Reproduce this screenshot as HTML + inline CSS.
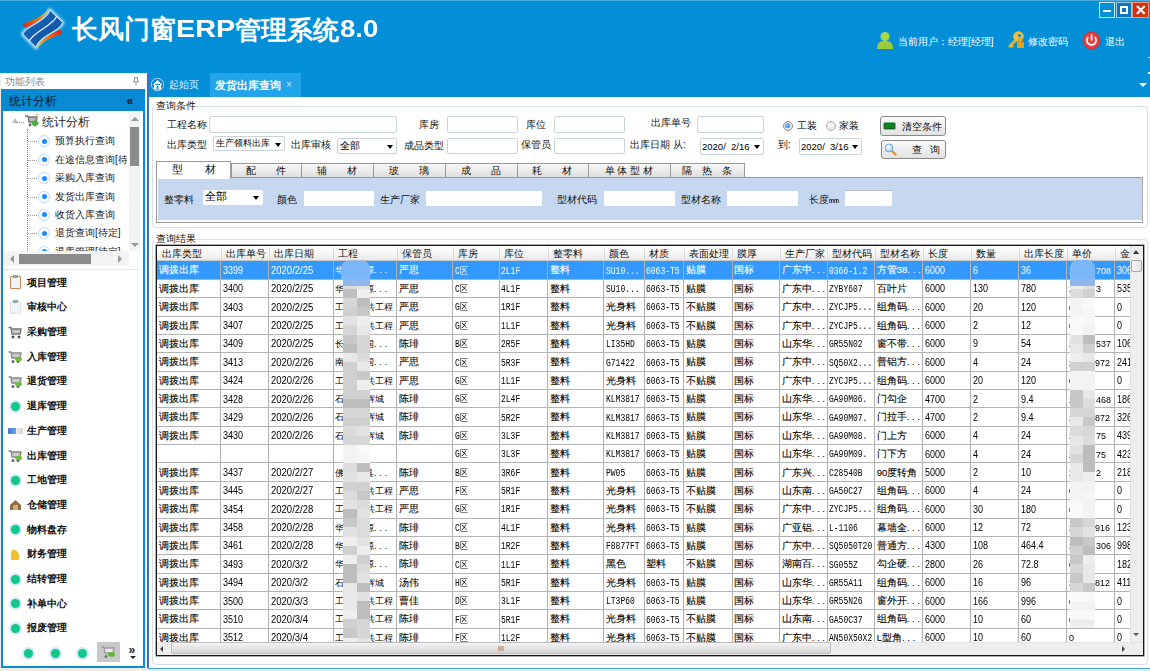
<!DOCTYPE html><html><head><meta charset="utf-8"><style>
*{box-sizing:border-box;margin:0;padding:0}
html,body{width:1150px;height:671px;overflow:hidden;background:#ececec;font-family:"Liberation Sans",sans-serif;color:#000}
.ab{position:absolute}
.t{position:absolute;white-space:nowrap;line-height:1}
.g{-webkit-text-stroke:0.1px currentColor}
.inp{position:absolute;background:#fff;border:1px solid #c9d3da;border-radius:2px}
.cmb{position:absolute;background:#fff;border:1px solid #c9d3da;border-radius:2px;font-size:10px;line-height:13px;padding-left:2px;white-space:nowrap;overflow:hidden}
.arr{position:absolute;width:0;height:0;border-left:3.5px solid transparent;border-right:3.5px solid transparent;border-top:4px solid #000}
.lbl{position:absolute;white-space:nowrap;font-size:10px;line-height:12px;color:#111}
</style></head><body>

<div class="ab" style="left:0;top:0;width:1150px;height:97px;background:#028fd8"></div>
<div class="ab" style="left:0;top:0;width:1150px;height:1px;background:#4fb0e6"></div>
<svg class="ab" style="left:18px;top:4px" width="50" height="50" viewBox="0 0 50 50">
<defs>
<linearGradient id="og" x1="0" y1="1" x2="1" y2="0"><stop offset="0" stop-color="#e01818"/><stop offset="0.55" stop-color="#f07810"/><stop offset="1" stop-color="#f0e040"/></linearGradient>
<linearGradient id="og2" x1="1" y1="0" x2="0" y2="1"><stop offset="0" stop-color="#e01818"/><stop offset="0.55" stop-color="#f07810"/><stop offset="1" stop-color="#f0e040"/></linearGradient>
<linearGradient id="bg" x1="0" y1="0" x2="1" y2="1"><stop offset="0" stop-color="#1a68bc"/><stop offset="1" stop-color="#0e50a0"/></linearGradient>
<filter id="gl" x="-30%" y="-30%" width="160%" height="160%"><feGaussianBlur stdDeviation="1.8"/></filter>
</defs>
<path d="M4.8 30.2 C8 22 28 18 32 6.3 L44.7 18.6 C41.5 27.5 21.5 31.5 17.9 43.2 Z" fill="none" stroke="#d8f0ff" stroke-width="3" filter="url(#gl)"/>
<path d="M4.8 20 C14 16 25 14 31 3.8 C29 12 20 18 7.5 24 Z" fill="url(#og)"/>
<path d="M44.7 29.5 C35.5 33.5 24.5 35.5 18.5 45.7 C20.5 37.5 29.5 31.5 42 25.5 Z" fill="url(#og2)"/>
<path d="M4.8 30.2 C8 22 28 18 32 6.3 L44.7 18.6 C41.5 27.5 21.5 31.5 17.9 43.2 Z" fill="url(#bg)" stroke="#e8f6ff" stroke-width="0.8"/>
<path d="M11.2 37.3 C14 28 35 22 38.7 12.3" stroke="#eef8ff" stroke-width="1.2" fill="none"/>
</svg>
<div class="t" style="left:72px;top:17px;font-size:25.5px;font-weight:bold;color:#fff">长风门窗</div>
<div class="t" style="left:176px;top:17px;font-size:24px;font-weight:bold;color:#fff;transform:scaleX(1.2);transform-origin:0 0">ERP</div>
<div class="t" style="left:235px;top:17px;font-size:26px;font-weight:bold;color:#fff">管理系统</div>
<div class="t" style="left:340px;top:17px;font-size:24px;font-weight:bold;color:#fff;transform:scaleX(1.15);transform-origin:0 0">8.0</div>
<div class="ab" style="left:1099px;top:2px;width:16px;height:16px;border:1px solid rgba(255,255,255,0.8);background:#028fd8"><div class="ab" style="left:3px;top:7px;width:8px;height:2px;background:#fff"></div></div>
<div class="ab" style="left:1116px;top:2px;width:16px;height:16px;border:1px solid rgba(255,255,255,0.6);background:#0a78c0"><div class="ab" style="left:3px;top:3px;width:8px;height:8px;border:2px solid #fff"></div></div>
<div class="ab" style="left:1132px;top:2px;width:17px;height:16px;border:1px solid rgba(255,220,200,0.6);background:#cc3510"><div class="t" style="left:2px;top:0px;font-size:14px;font-weight:bold;color:#fff">✕</div></div>
<svg class="ab" style="left:876px;top:31px" width="18" height="19" viewBox="0 0 18 19">
<circle cx="9" cy="5.5" r="4.6" fill="#a6d84a"/><path d="M1 18 C1 11 4 10 9 10 C14 10 17 11 17 18 Z" fill="#98cc3c"/></svg>
<div class="t" style="left:898px;top:36.5px;font-size:10px;color:#fff">当前用户：经理[经理]</div>
<svg class="ab" style="left:1006px;top:30px" width="20" height="20" viewBox="0 0 20 20">
<circle cx="12.5" cy="6.5" r="5.2" fill="#f2c040"/><circle cx="13.5" cy="5.5" r="1.6" fill="#028fd8"/>
<path d="M9 9 L2 16 L4 18 L5 17 L6 18 L8 16 L7 15 L11 11 Z" fill="#e8b030"/>
<rect x="11" y="12" width="7" height="6" rx="1" fill="#e0a020"/><path d="M12.5 12 V10.5 A2 2 0 0 1 16.5 10.5 V12" stroke="#c09030" stroke-width="1.2" fill="none"/></svg>
<div class="t" style="left:1028px;top:36.5px;font-size:10px;color:#fff">修改密码</div>
<svg class="ab" style="left:1082px;top:31px" width="19" height="19" viewBox="0 0 19 19">
<circle cx="9.5" cy="9.5" r="9" fill="#d83030"/><circle cx="9.5" cy="9.5" r="8" fill="#e04040"/>
<path d="M6.3 6 A4.6 4.6 0 1 0 12.7 6" stroke="#fff" stroke-width="1.7" fill="none"/><rect x="8.7" y="3.5" width="1.7" height="6" fill="#fff"/></svg>
<div class="t" style="left:1105px;top:36.5px;font-size:10px;color:#fff">退出</div>
<div class="ab" style="left:0;top:73px;width:148px;height:598px;background:#ececec"></div>
<div class="ab" style="left:145px;top:73px;width:2px;height:595px;background:#f3f5f7"></div>
<div class="ab" style="left:0;top:70px;width:8px;height:3px;background:#028fd8;border-bottom-left-radius:3px"></div>
<div class="ab" style="left:1px;top:73px;width:145px;height:16px;background:#fff"></div>
<div class="t" style="left:5px;top:76.5px;font-size:9.6px;color:#8a8a8a">功能列表</div>
<div class="t" style="left:134px;top:74px;font-size:10px;color:#999">ᅟ</div>
<svg class="ab" style="left:132px;top:77px" width="8" height="9" viewBox="0 0 8 9"><path d="M2 0.5 H6 M2.5 0.5 V5 M5.5 0.5 V5 M1 5 H7 M4 5 V8.5" stroke="#9a9a9a" stroke-width="1" fill="none"/></svg>
<div class="ab" style="left:1px;top:89px;width:144px;height:579px;border:2px solid #0a8ad3;border-top:none;background:#fff"></div>
<div class="ab" style="left:1px;top:89px;width:144px;height:22px;background:#0a8ad3"></div>
<div class="t" style="left:8.5px;top:96px;font-size:11.8px;color:#061626">统计分析</div>
<div class="t" style="left:126.5px;top:94.5px;font-size:12px;font-weight:bold;color:#061626">«</div>
<div class="ab" style="left:12px;top:118px;width:0;height:0;border-left:3px solid transparent;border-right:3px solid transparent;border-bottom:5px solid #bbb"></div>
<div class="ab" style="left:16px;top:122px;width:8px;border-top:1px dotted #999"></div>
<div class="ab" style="left:27px;top:129px;height:122px;border-left:1px dotted #888"></div>
<svg class="ab" style="left:24px;top:114px" width="15" height="14" viewBox="0 0 15 14"><path d="M1 2 H4 L5 8 H12 L13 3 H5" stroke="#777" stroke-width="1.4" fill="#bbb"/><circle cx="6" cy="11" r="1.4" fill="#666"/><circle cx="11" cy="11" r="1.4" fill="#666"/><ellipse cx="11" cy="9" rx="3.5" ry="2.5" fill="#4cb040"/><path d="M12 1 L14 0" stroke="#f08020"/></svg>
<div class="t" style="left:42px;top:116.8px;font-size:11.5px;color:#222">统计分析</div>
<div class="ab" style="left:28px;top:141.3px;width:9px;border-top:1px dotted #999"></div>
<div class="ab" style="left:38px;top:135.3px;width:12px;height:12px;border-radius:50%;background:#fff;border:1px solid #b8dcff"><div class="ab" style="left:2.5px;top:2.5px;width:5px;height:5px;border-radius:50%;background:#1a8cff"></div></div>
<div class="ab" style="left:55px;top:134.3px;width:72px;height:14px;overflow:hidden"><div class="t" style="left:0;top:2.2px;font-size:10.1px;color:#222">预算执行查询</div></div>
<div class="ab" style="left:28px;top:159.7px;width:9px;border-top:1px dotted #999"></div>
<div class="ab" style="left:38px;top:153.7px;width:12px;height:12px;border-radius:50%;background:#fff;border:1px solid #b8dcff"><div class="ab" style="left:2.5px;top:2.5px;width:5px;height:5px;border-radius:50%;background:#1a8cff"></div></div>
<div class="ab" style="left:55px;top:152.7px;width:72px;height:14px;overflow:hidden"><div class="t" style="left:0;top:2.2px;font-size:10.1px;color:#222">在途信息查询[待</div></div>
<div class="ab" style="left:28px;top:178.1px;width:9px;border-top:1px dotted #999"></div>
<div class="ab" style="left:38px;top:172.1px;width:12px;height:12px;border-radius:50%;background:#fff;border:1px solid #b8dcff"><div class="ab" style="left:2.5px;top:2.5px;width:5px;height:5px;border-radius:50%;background:#1a8cff"></div></div>
<div class="ab" style="left:55px;top:171.1px;width:72px;height:14px;overflow:hidden"><div class="t" style="left:0;top:2.2px;font-size:10.1px;color:#222">采购入库查询</div></div>
<div class="ab" style="left:28px;top:196.5px;width:9px;border-top:1px dotted #999"></div>
<div class="ab" style="left:38px;top:190.5px;width:12px;height:12px;border-radius:50%;background:#fff;border:1px solid #b8dcff"><div class="ab" style="left:2.5px;top:2.5px;width:5px;height:5px;border-radius:50%;background:#1a8cff"></div></div>
<div class="ab" style="left:55px;top:189.5px;width:72px;height:14px;overflow:hidden"><div class="t" style="left:0;top:2.2px;font-size:10.1px;color:#222">发货出库查询</div></div>
<div class="ab" style="left:28px;top:214.9px;width:9px;border-top:1px dotted #999"></div>
<div class="ab" style="left:38px;top:208.9px;width:12px;height:12px;border-radius:50%;background:#fff;border:1px solid #b8dcff"><div class="ab" style="left:2.5px;top:2.5px;width:5px;height:5px;border-radius:50%;background:#1a8cff"></div></div>
<div class="ab" style="left:55px;top:207.9px;width:72px;height:14px;overflow:hidden"><div class="t" style="left:0;top:2.2px;font-size:10.1px;color:#222">收货入库查询</div></div>
<div class="ab" style="left:28px;top:233.3px;width:9px;border-top:1px dotted #999"></div>
<div class="ab" style="left:38px;top:227.3px;width:12px;height:12px;border-radius:50%;background:#fff;border:1px solid #b8dcff"><div class="ab" style="left:2.5px;top:2.5px;width:5px;height:5px;border-radius:50%;background:#1a8cff"></div></div>
<div class="ab" style="left:55px;top:226.3px;width:72px;height:14px;overflow:hidden"><div class="t" style="left:0;top:2.2px;font-size:10.1px;color:#222">退货查询[待定]</div></div>
<div class="ab" style="left:28px;top:251.7px;width:9px;border-top:1px dotted #999"></div>
<div class="ab" style="left:38px;top:245.7px;width:12px;height:12px;border-radius:50%;background:#fff;border:1px solid #b8dcff"><div class="ab" style="left:2.5px;top:2.5px;width:5px;height:5px;border-radius:50%;background:#1a8cff"></div></div>
<div class="ab" style="left:55px;top:244.7px;width:72px;height:14px;overflow:hidden"><div class="t" style="left:0;top:2.2px;font-size:10.1px;color:#222">退库管理[待定]</div></div>
<div class="ab" style="left:3px;top:251px;width:139px;height:17px;background:#fff"></div>
<div class="ab" style="left:129px;top:111px;width:11px;height:140px;background:#f3f3f3"></div>
<div class="ab" style="left:131px;top:116.5px;width:0;height:0;border-left:4px solid transparent;border-right:4px solid transparent;border-bottom:4px solid #999"></div>
<div class="ab" style="left:130px;top:127px;width:9px;height:39px;background:#8c8c8c"></div>
<div class="ab" style="left:131px;top:243px;width:0;height:0;border-left:4px solid transparent;border-right:4px solid transparent;border-top:4px solid #999"></div>
<div class="ab" style="left:3px;top:251px;width:126px;height:15px;background:#f3f3f3"></div>
<div class="ab" style="left:10px;top:255px;width:0;height:0;border-top:4px solid transparent;border-bottom:4px solid transparent;border-right:4px solid #999"></div>
<div class="ab" style="left:19px;top:254px;width:72px;height:10px;background:#8c8c8c"></div>
<div class="ab" style="left:118px;top:255px;width:0;height:0;border-top:4px solid transparent;border-bottom:4px solid transparent;border-left:4px solid #999"></div>
<div class="ab" style="left:3px;top:269px;width:138px;height:1px;background:#e6e6e6"></div>
<div class="ab" style="left:10px;top:276.3px;width:11px;height:13px;border:1.5px solid #d08850;background:#eef4fb;border-radius:1px"><div class="ab" style="left:2px;top:-2px;width:5px;height:3px;background:#8aa"></div></div>
<div class="t" style="left:27px;top:277.6px;font-size:10px;font-weight:bold;color:#111">项目管理</div>
<div class="ab" style="left:10px;top:301.0px;width:11px;height:13px;border:1.5px solid #e8e0d0;background:#eef4fb;border-radius:1px"><div class="ab" style="left:2px;top:-2px;width:5px;height:3px;background:#8aa"></div></div>
<div class="t" style="left:27px;top:302.3px;font-size:10px;font-weight:bold;color:#111">审核中心</div>
<svg class="ab" style="left:8px;top:325.7px" width="15" height="13" viewBox="0 0 15 13"><path d="M0.5 1.5 H3 L4 8 H12 L13 3 H4" stroke="#777" stroke-width="1.4" fill="#c8c8c8"/><circle cx="5" cy="11" r="1.5" fill="#555"/><circle cx="11" cy="11" r="1.5" fill="#555"/></svg>
<div class="t" style="left:27px;top:327.0px;font-size:10px;font-weight:bold;color:#111">采购管理</div>
<svg class="ab" style="left:8px;top:349.9px" width="15" height="14" viewBox="0 0 15 14"><path d="M0.5 2 H3 L4 8 H12 L13 3 H4" stroke="#888" stroke-width="1.4" fill="#ccc"/><circle cx="5" cy="11.5" r="1.5" fill="#666"/><circle cx="10" cy="11.5" r="1.5" fill="#666"/><ellipse cx="10.5" cy="9" rx="3.5" ry="2.3" fill="#6cc040"/></svg>
<div class="t" style="left:27px;top:351.7px;font-size:10px;font-weight:bold;color:#111">入库管理</div>
<svg class="ab" style="left:8px;top:374.6px" width="15" height="14" viewBox="0 0 15 14"><path d="M0.5 2 H3 L4 8 H12 L13 3 H4" stroke="#888" stroke-width="1.4" fill="#ccc"/><circle cx="5" cy="11.5" r="1.5" fill="#666"/><circle cx="10" cy="11.5" r="1.5" fill="#666"/><ellipse cx="10.5" cy="9" rx="3.5" ry="2.3" fill="#6cc040"/></svg>
<div class="t" style="left:27px;top:376.4px;font-size:10px;font-weight:bold;color:#111">退货管理</div>
<div class="ab" style="left:9px;top:399.8px;width:13px;height:13px;border-radius:50%;background:#cfe9fb"><div class="ab" style="left:2px;top:2px;width:9px;height:9px;border-radius:50%;background:#10c888"></div></div>
<div class="t" style="left:27px;top:401.1px;font-size:10px;font-weight:bold;color:#111">退库管理</div>
<div class="ab" style="left:8px;top:428.0px;width:15px;height:6px;background:linear-gradient(90deg,#3a7ad0 0,#6aa8e8 55%,#e8e8e8 56%,#d8d8d8);border-radius:1px"></div>
<div class="t" style="left:27px;top:425.8px;font-size:10px;font-weight:bold;color:#111">生产管理</div>
<svg class="ab" style="left:8px;top:448.7px" width="15" height="14" viewBox="0 0 15 14"><path d="M0.5 2 H3 L4 8 H12 L13 3 H4" stroke="#888" stroke-width="1.4" fill="#ccc"/><circle cx="5" cy="11.5" r="1.5" fill="#666"/><circle cx="10" cy="11.5" r="1.5" fill="#666"/><ellipse cx="10.5" cy="9" rx="3.5" ry="2.3" fill="#6cc040"/></svg>
<div class="t" style="left:27px;top:450.5px;font-size:10px;font-weight:bold;color:#111">出库管理</div>
<div class="ab" style="left:9px;top:473.9px;width:13px;height:13px;border-radius:50%;background:#cfe9fb"><div class="ab" style="left:2px;top:2px;width:9px;height:9px;border-radius:50%;background:#10c888"></div></div>
<div class="t" style="left:27px;top:475.2px;font-size:10px;font-weight:bold;color:#111">工地管理</div>
<svg class="ab" style="left:9px;top:499.1px" width="13" height="12" viewBox="0 0 13 12"><path d="M1 6 L6.5 1 L12 6 V11 H1 Z" fill="#8a7040"/><rect x="4" y="6" width="5" height="5" fill="#d0b070"/></svg>
<div class="t" style="left:27px;top:499.9px;font-size:10px;font-weight:bold;color:#111">仓储管理</div>
<div class="ab" style="left:9px;top:523.3px;width:13px;height:13px;border-radius:50%;background:#cfe9fb"><div class="ab" style="left:2px;top:2px;width:9px;height:9px;border-radius:50%;background:#10c888"></div></div>
<div class="t" style="left:27px;top:524.6px;font-size:10px;font-weight:bold;color:#111">物料盘存</div>
<svg class="ab" style="left:10px;top:548.5px" width="10" height="12" viewBox="0 0 10 12"><path d="M2 1 H6 L9 5 V11 H1 V5 Z" fill="#f0c030"/></svg>
<div class="t" style="left:27px;top:549.3px;font-size:10px;font-weight:bold;color:#111">财务管理</div>
<div class="ab" style="left:9px;top:572.7px;width:13px;height:13px;border-radius:50%;background:#cfe9fb"><div class="ab" style="left:2px;top:2px;width:9px;height:9px;border-radius:50%;background:#10c888"></div></div>
<div class="t" style="left:27px;top:574.0px;font-size:10px;font-weight:bold;color:#111">结转管理</div>
<div class="ab" style="left:9px;top:597.4px;width:13px;height:13px;border-radius:50%;background:#cfe9fb"><div class="ab" style="left:2px;top:2px;width:9px;height:9px;border-radius:50%;background:#10c888"></div></div>
<div class="t" style="left:27px;top:598.7px;font-size:10px;font-weight:bold;color:#111">补单中心</div>
<div class="ab" style="left:9px;top:622.1px;width:13px;height:13px;border-radius:50%;background:#cfe9fb"><div class="ab" style="left:2px;top:2px;width:9px;height:9px;border-radius:50%;background:#10c888"></div></div>
<div class="t" style="left:27px;top:623.4px;font-size:10px;font-weight:bold;color:#111">报废管理</div>
<div class="ab" style="left:28px;top:646.5px;width:13px;height:13px;border-radius:50%;background:#cfe9fb;margin-left:-6.5px"><div class="ab" style="left:2px;top:2px;width:9px;height:9px;border-radius:50%;background:#10c888"></div></div>
<div class="ab" style="left:55px;top:646.5px;width:13px;height:13px;border-radius:50%;background:#cfe9fb;margin-left:-6.5px"><div class="ab" style="left:2px;top:2px;width:9px;height:9px;border-radius:50%;background:#10c888"></div></div>
<div class="ab" style="left:82px;top:646.5px;width:13px;height:13px;border-radius:50%;background:#cfe9fb;margin-left:-6.5px"><div class="ab" style="left:2px;top:2px;width:9px;height:9px;border-radius:50%;background:#10c888"></div></div>
<div class="ab" style="left:97px;top:642px;width:23px;height:20px;background:#c8c8c8"></div>
<svg class="ab" style="left:101px;top:645px" width="15" height="14" viewBox="0 0 15 14"><path d="M0.5 2 H3 L4 8 H12 L13 3 H4" stroke="#999" stroke-width="1.3" fill="#e8e8e8"/><circle cx="5" cy="11.5" r="1.5" fill="#777"/><ellipse cx="10.5" cy="9.5" rx="3.5" ry="2.3" fill="#60b830"/></svg>
<div class="t" style="left:128.5px;top:644px;font-size:12px;font-weight:bold;color:#223">»</div>
<div class="ab" style="left:130px;top:656px;width:0;height:0;border-left:3px solid transparent;border-right:3px solid transparent;border-top:3px solid #223"></div>
<div class="ab" style="left:148px;top:73px;width:1002px;height:24px;background:#028fd8"></div>
<svg class="ab" style="left:150px;top:77px" width="15" height="15" viewBox="0 0 15 15"><circle cx="7.5" cy="7.5" r="6.2" fill="#1a80c8" stroke="#b8dcf4" stroke-width="0.9"/><path d="M3 8 L7.5 3.5 L12 8 M4.5 7 V12 H10.5 V7" fill="#fff" stroke="#fff" stroke-width="1"/><rect x="6.5" y="9" width="2" height="3" fill="#1a8ad0"/></svg>
<div class="t" style="left:169px;top:80px;font-size:10px;color:#e6f3fb">起始页</div>
<div class="ab" style="left:210px;top:73px;width:91px;height:24px;background:#21a4ea"></div>
<div class="t" style="left:215px;top:80px;font-size:10.5px;font-weight:bold;color:#fff">发货出库查询</div>
<div class="t" style="left:286px;top:80px;font-size:10px;color:#cfeafa">×</div>
<div class="ab" style="left:1138.5px;top:82.5px;width:0;height:0;border-left:4px solid transparent;border-right:4px solid transparent;border-top:4.5px solid #fff"></div>
<div class="ab" style="left:1148px;top:56.5px;width:2px;height:1.5px;background:#fff"></div>
<div class="ab" style="left:1148px;top:72px;width:2px;height:1.5px;background:#fff"></div>
<div class="ab" style="left:148.5px;top:97px;width:1001.5px;height:571px;background:#fff"></div>
<div class="ab" style="left:148px;top:667.5px;width:1002px;height:1.5px;background:#40a8e0"></div>
<div class="ab" style="left:147px;top:73px;width:1.5px;height:595px;background:#3a6ec8"></div>
<div class="ab" style="left:151.5px;top:106px;width:996px;height:121.5px;border:1px solid #d6e0e6;border-radius:4px"></div>
<div class="ab" style="left:155px;top:100px;width:42px;height:12px;background:#fff"></div>
<div class="lbl" style="left:156px;top:100px;font-size:9.8px">查询条件</div>
<div class="lbl" style="left:167px;top:119px;font-size:10px">工程名称</div>
<div class="inp" style="left:209px;top:116px;width:188px;height:17px"></div>
<div class="lbl" style="left:419px;top:119px;font-size:10px">库房</div>
<div class="inp" style="left:447px;top:116px;width:71px;height:17px"></div>
<div class="lbl" style="left:526px;top:119px;font-size:10px">库位</div>
<div class="inp" style="left:554px;top:116px;width:71px;height:17px"></div>
<div class="lbl" style="left:651px;top:117px;font-size:10px">出库单号</div>
<div class="inp" style="left:697px;top:116px;width:67px;height:17px"></div>
<div class="lbl" style="left:167px;top:139px;font-size:10px">出库类型</div>
<div class="cmb" style="left:213px;top:136px;width:72px;height:15px;font-size:9.3px">生产领料出库<div class="arr" style="right:3px;top:6px"></div></div>
<div class="lbl" style="left:291px;top:139px;font-size:10px">出库审核</div>
<div class="cmb" style="left:337px;top:138px;width:60px;height:16px;font-size:10px">全部<div class="arr" style="right:3px;top:6px"></div></div>
<div class="lbl" style="left:404px;top:140px;font-size:10px">成品类型</div>
<div class="inp" style="left:447px;top:138px;width:71px;height:16px"></div>
<div class="lbl" style="left:521px;top:139px;font-size:10px">保管员</div>
<div class="inp" style="left:554px;top:138px;width:71px;height:16px"></div>
<div class="lbl" style="left:630px;top:139px;font-size:10px">出库日期</div>
<div class="lbl" style="left:673px;top:139px;font-size:10px">从:</div>
<div class="cmb" style="left:700px;top:138px;width:64px;height:17px;padding-left:1px"><div class="t" style="left:1px;top:3px;font-size:9.5px">2020/&nbsp;&nbsp;2/16</div><div class="arr" style="right:3px;top:6px"></div></div>
<div class="lbl" style="left:778px;top:139px;font-size:10px">到:</div>
<div class="cmb" style="left:799px;top:138px;width:63px;height:17px;padding-left:1px"><div class="t" style="left:1px;top:3px;font-size:9.5px">2020/&nbsp;&nbsp;3/16</div><div class="arr" style="right:3px;top:6px"></div></div>
<div class="ab" style="left:782.5px;top:120.5px;width:10px;height:10px;border-radius:50%;border:1px solid #8a8a8a;background:#e4e8ec"><div class="ab" style="left:1.5px;top:1.5px;width:5px;height:5px;border-radius:50%;background:radial-gradient(circle at 40% 35%,#8fd0ff,#0a6ac0)"></div></div>
<div class="lbl" style="left:797px;top:120px;font-size:10px">工装</div>
<div class="ab" style="left:825.5px;top:120.5px;width:10px;height:10px;border-radius:50%;border:1px solid #a8a8a8;background:radial-gradient(circle at 40% 35%,#fff,#ddd)"></div>
<div class="lbl" style="left:839px;top:120px;font-size:10px">家装</div>
<div class="ab" style="left:880px;top:116px;width:66px;height:20px;border:1px solid #8a8a8a;border-radius:3px;background:linear-gradient(#fafafa,#e2e2e2)"></div>
<div class="ab" style="left:883px;top:122px;width:12.5px;height:8px;border:1.5px solid #78c088;border-radius:2px;background:#0a8a1a;box-shadow:inset 0 0 0 0.8px #1a5a22"></div>
<div class="lbl" style="left:902px;top:121px;font-size:9.6px">清空条件</div>
<div class="ab" style="left:881px;top:140px;width:65px;height:19px;border:1px solid #8a8a8a;border-radius:3px;background:linear-gradient(#fafafa,#e2e2e2)"></div>
<svg class="ab" style="left:884px;top:143px" width="13" height="13" viewBox="0 0 13 13"><defs><radialGradient id="lens" cx="0.4" cy="0.35" r="0.7"><stop offset="0" stop-color="#ffffff"/><stop offset="1" stop-color="#8cc8f0"/></radialGradient></defs><path d="M7.5 7.5 L11.5 11.5" stroke="#e09030" stroke-width="2.4" stroke-linecap="round"/><circle cx="5" cy="5" r="4" fill="url(#lens)" stroke="#7aaed8" stroke-width="1"/></svg>
<div class="lbl" style="left:912px;top:144px;font-size:10px;letter-spacing:8px">查询</div>
<div class="ab" style="left:230.6px;top:163px;width:71.20000000000002px;height:14.5px;border:1px solid #9a9a9a;border-bottom:none;background:linear-gradient(#f8f8f8,#dcdcdc)"></div>
<div class="lbl" style="left:230.6px;top:164.5px;width:70.20000000000002px;text-align:center;font-size:10px">配　　件</div>
<div class="ab" style="left:300.8px;top:163px;width:72.80000000000001px;height:14.5px;border:1px solid #9a9a9a;border-bottom:none;background:linear-gradient(#f8f8f8,#dcdcdc)"></div>
<div class="lbl" style="left:300.8px;top:164.5px;width:71.80000000000001px;text-align:center;font-size:10px">辅　　材</div>
<div class="ab" style="left:372.6px;top:163px;width:73.0px;height:14.5px;border:1px solid #9a9a9a;border-bottom:none;background:linear-gradient(#f8f8f8,#dcdcdc)"></div>
<div class="lbl" style="left:372.6px;top:164.5px;width:72.0px;text-align:center;font-size:10px">玻　　璃</div>
<div class="ab" style="left:444.6px;top:163px;width:73.10000000000002px;height:14.5px;border:1px solid #9a9a9a;border-bottom:none;background:linear-gradient(#f8f8f8,#dcdcdc)"></div>
<div class="lbl" style="left:444.6px;top:164.5px;width:72.10000000000002px;text-align:center;font-size:10px">成　　品</div>
<div class="ab" style="left:516.7px;top:163px;width:72.29999999999995px;height:14.5px;border:1px solid #9a9a9a;border-bottom:none;background:linear-gradient(#f8f8f8,#dcdcdc)"></div>
<div class="lbl" style="left:516.7px;top:164.5px;width:71.29999999999995px;text-align:center;font-size:10px">耗　　材</div>
<div class="ab" style="left:588px;top:163px;width:82.70000000000005px;height:14.5px;border:1px solid #9a9a9a;border-bottom:none;background:linear-gradient(#f8f8f8,#dcdcdc)"></div>
<div class="lbl" style="left:588px;top:164.5px;width:81.70000000000005px;text-align:center;font-size:10px">单 体 型 材</div>
<div class="ab" style="left:669.7px;top:163px;width:75.59999999999991px;height:14.5px;border:1px solid #9a9a9a;border-bottom:none;background:linear-gradient(#f8f8f8,#dcdcdc)"></div>
<div class="lbl" style="left:669.7px;top:164.5px;width:74.59999999999991px;text-align:center;font-size:10px">隔　热　条</div>
<div class="ab" style="left:156px;top:177px;width:987px;height:45.5px;border:1px solid #9a9a9a;border-right-color:#aaa;background:#fff"></div>
<div class="ab" style="left:158px;top:178px;width:983.5px;height:41.5px;background:#c5d8f0"></div>
<div class="ab" style="left:156px;top:161px;width:75px;height:18px;border:1px solid #9a9a9a;border-bottom:none;background:#fff"></div>
<div class="lbl" style="left:156px;top:163px;width:75px;text-align:center;font-size:10.5px">型　　材</div>
<div class="lbl" style="left:164px;top:194px;font-size:10px">整零料</div>
<div class="cmb" style="left:203px;top:190px;width:60px;height:15px;border:none;font-size:10.5px;line-height:13px">全部<div class="arr" style="right:4px;top:6px"></div></div>
<div class="lbl" style="left:277px;top:194px;font-size:10px">颜色</div>
<div class="inp" style="left:304px;top:191px;width:70px;height:15px;border:none;border-radius:0"></div>
<div class="lbl" style="left:380px;top:194px;font-size:10px">生产厂家</div>
<div class="inp" style="left:426px;top:191px;width:116px;height:15px;border:none;border-radius:0"></div>
<div class="lbl" style="left:557px;top:194px;font-size:10px">型材代码</div>
<div class="inp" style="left:604px;top:191px;width:71px;height:15px;border:none;border-radius:0"></div>
<div class="lbl" style="left:681px;top:194px;font-size:10px">型材名称</div>
<div class="inp" style="left:727px;top:191px;width:71px;height:15px;border:none;border-radius:0"></div>
<div class="lbl" style="left:809px;top:194px;font-size:10px">长度<span style="font-size:7px;font-weight:bold;display:inline-block;transform:scaleX(0.8);transform-origin:0 0">mm</span></div>
<div class="inp" style="left:845px;top:189.5px;width:47px;height:16.5px;border:none;border-top:1px solid #b8b8c0;border-radius:0"></div>
<div class="ab" style="left:151.5px;top:238.5px;width:996px;height:426.5px;border:1px solid #d6e0e6;border-radius:4px"></div>
<div class="ab" style="left:155px;top:233px;width:42px;height:10px;background:#fff"></div>
<div class="lbl" style="left:156px;top:232.5px;font-size:9.8px">查询结果</div>
<div class="ab" style="left:156px;top:245px;width:988px;height:411px;border:1px solid #151515;box-shadow:0 0 0 0.6px #777;background:#fff;overflow:hidden">
<div class="ab" style="left:0;top:0;width:1000px;height:14.949999999999989px;background:linear-gradient(#ffffff,#f4f4f4 60%,#e8e8e8);border-bottom:1px solid #c8c8c8"></div>
<div class="t" style="left:4.5px;top:2.5px;font-size:10px;color:#111">出库类型</div>
<div class="ab" style="left:63.5px;top:1px;width:1px;height:12.9px;background:#dcdcdc"></div>
<div class="t" style="left:68.5px;top:2.5px;font-size:10px;color:#111">出库单号</div>
<div class="ab" style="left:111.5px;top:1px;width:1px;height:12.9px;background:#dcdcdc"></div>
<div class="t" style="left:116.5px;top:2.5px;font-size:10px;color:#111">出库日期</div>
<div class="ab" style="left:176.0px;top:1px;width:1px;height:12.9px;background:#dcdcdc"></div>
<div class="t" style="left:181.0px;top:2.5px;font-size:10px;color:#111">工程</div>
<div class="ab" style="left:239.5px;top:1px;width:1px;height:12.9px;background:#dcdcdc"></div>
<div class="t" style="left:244.5px;top:2.5px;font-size:10px;color:#111">保管员</div>
<div class="ab" style="left:295.6px;top:1px;width:1px;height:12.9px;background:#dcdcdc"></div>
<div class="t" style="left:300.6px;top:2.5px;font-size:10px;color:#111">库房</div>
<div class="ab" style="left:342.0px;top:1px;width:1px;height:12.9px;background:#dcdcdc"></div>
<div class="t" style="left:347.0px;top:2.5px;font-size:10px;color:#111">库位</div>
<div class="ab" style="left:390.5px;top:1px;width:1px;height:12.9px;background:#dcdcdc"></div>
<div class="t" style="left:395.5px;top:2.5px;font-size:10px;color:#111">整零料</div>
<div class="ab" style="left:446.5px;top:1px;width:1px;height:12.9px;background:#dcdcdc"></div>
<div class="t" style="left:451.5px;top:2.5px;font-size:10px;color:#111">颜色</div>
<div class="ab" style="left:487.0px;top:1px;width:1px;height:12.9px;background:#dcdcdc"></div>
<div class="t" style="left:492.0px;top:2.5px;font-size:10px;color:#111">材质</div>
<div class="ab" style="left:526.5px;top:1px;width:1px;height:12.9px;background:#dcdcdc"></div>
<div class="t" style="left:531.5px;top:2.5px;font-size:10px;color:#111">表面处理</div>
<div class="ab" style="left:575.0px;top:1px;width:1px;height:12.9px;background:#dcdcdc"></div>
<div class="t" style="left:580.0px;top:2.5px;font-size:10px;color:#111">膜厚</div>
<div class="ab" style="left:622.7px;top:1px;width:1px;height:12.9px;background:#dcdcdc"></div>
<div class="t" style="left:627.7px;top:2.5px;font-size:10px;color:#111">生产厂家</div>
<div class="ab" style="left:670.3px;top:1px;width:1px;height:12.9px;background:#dcdcdc"></div>
<div class="t" style="left:675.3px;top:2.5px;font-size:10px;color:#111">型材代码</div>
<div class="ab" style="left:717.8px;top:1px;width:1px;height:12.9px;background:#dcdcdc"></div>
<div class="t" style="left:722.8px;top:2.5px;font-size:10px;color:#111">型材名称</div>
<div class="ab" style="left:765.7px;top:1px;width:1px;height:12.9px;background:#dcdcdc"></div>
<div class="t" style="left:770.7px;top:2.5px;font-size:10px;color:#111">长度</div>
<div class="ab" style="left:813.7px;top:1px;width:1px;height:12.9px;background:#dcdcdc"></div>
<div class="t" style="left:818.7px;top:2.5px;font-size:10px;color:#111">数量</div>
<div class="ab" style="left:861.5px;top:1px;width:1px;height:12.9px;background:#dcdcdc"></div>
<div class="t" style="left:866.5px;top:2.5px;font-size:10px;color:#111">出库长度</div>
<div class="ab" style="left:909.7px;top:1px;width:1px;height:12.9px;background:#dcdcdc"></div>
<div class="t" style="left:914.7px;top:2.5px;font-size:10px;color:#111">单价</div>
<div class="ab" style="left:957.8px;top:1px;width:1px;height:12.9px;background:#dcdcdc"></div>
<div class="t" style="left:962.8px;top:2.5px;font-size:10px;color:#111">金额</div>
<div class="ab" style="left:0;top:14.95px;width:1000px;height:18.37px;background:#3399ff"></div>
<div class="t g" style="left:1.5px;top:19.4px;font-size:9.5px;color:#fff">调拨出库</div>
<div class="t" style="left:65.5px;top:19.9px;font-size:10px;transform:scaleX(0.9);transform-origin:0 0;color:#fff">3399</div>
<div class="t" style="left:113.5px;top:19.9px;font-size:10px;transform:scaleX(0.95);transform-origin:0 0;color:#fff">2020/2/25</div>
<div class="t" style="left:178.0px;top:19.4px;font-size:9.4px;color:#fff">华</div>
<div class="ab" style="left:208.0px;top:19.4px;width:30.0px;height:14px;overflow:hidden"><div class="t" style="left:0;top:0;font-size:9.4px;color:#fff">源. . .</div></div>
<div class="t g" style="left:241.5px;top:19.4px;font-size:9.5px;color:#fff">严思</div>
<div class="t" style="left:297.6px;top:20.6px;font-family:'Liberation Mono',monospace;font-size:10px;transform:scaleX(0.8);transform-origin:0 0;color:#fff">C区</div>
<div class="t" style="left:344.0px;top:20.6px;font-family:'Liberation Mono',monospace;font-size:10px;transform:scaleX(0.8);transform-origin:0 0;color:#fff">2L1F</div>
<div class="t g" style="left:392.5px;top:19.4px;font-size:9.5px;color:#fff">整料</div>
<div class="t" style="left:448.5px;top:20.6px;font-family:'Liberation Mono',monospace;font-size:10px;transform:scaleX(0.8);transform-origin:0 0;color:#fff">SU10...</div>
<div class="t" style="left:489.0px;top:20.6px;font-family:'Liberation Mono',monospace;font-size:10px;transform:scaleX(0.8);transform-origin:0 0;color:#fff">6063-T5</div>
<div class="t g" style="left:528.5px;top:19.4px;font-size:9.5px;color:#fff">贴膜</div>
<div class="t g" style="left:577.0px;top:19.4px;font-size:9.5px;color:#fff">国标</div>
<div class="t g" style="left:624.7px;top:19.4px;font-size:9.5px;color:#fff">广东中. . .</div>
<div class="t" style="left:672.3px;top:20.6px;font-family:'Liberation Mono',monospace;font-size:10px;transform:scaleX(0.8);transform-origin:0 0;color:#fff">0366-1.2</div>
<div class="t g" style="left:719.8px;top:19.4px;font-size:9.5px;color:#fff">方管38. . .</div>
<div class="t" style="left:767.7px;top:19.9px;font-size:10px;transform:scaleX(0.9);transform-origin:0 0;color:#fff">6000</div>
<div class="t" style="left:815.7px;top:19.9px;font-size:10px;transform:scaleX(0.9);transform-origin:0 0;color:#fff">6</div>
<div class="t" style="left:863.5px;top:19.9px;font-size:10px;transform:scaleX(0.9);transform-origin:0 0;color:#fff">36</div>
<div class="t" style="left:911.7px;top:19.9px;font-size:9.5px;transform:scaleX(0.94);transform-origin:0 0;color:#fff">2</div>
<div class="t" style="left:938.5px;top:19.9px;font-size:9.5px;transform:scaleX(0.94);transform-origin:0 0;color:#fff">708</div>
<div class="t" style="left:959.8px;top:19.9px;font-size:10px;transform:scaleX(0.9);transform-origin:0 0;color:#fff">306</div>
<div class="ab" style="left:0;top:33.32px;width:1000px;height:18.37px;background:#fff"></div>
<div class="t g" style="left:1.5px;top:37.8px;font-size:9.5px;color:#000">调拨出库</div>
<div class="t" style="left:65.5px;top:38.3px;font-size:10px;transform:scaleX(0.9);transform-origin:0 0;color:#000">3400</div>
<div class="t" style="left:113.5px;top:38.3px;font-size:10px;transform:scaleX(0.95);transform-origin:0 0;color:#000">2020/2/25</div>
<div class="t" style="left:178.0px;top:37.8px;font-size:9.4px;color:#000">华</div>
<div class="ab" style="left:208.0px;top:37.8px;width:30.0px;height:14px;overflow:hidden"><div class="t" style="left:0;top:0;font-size:9.4px;color:#000">源. . .</div></div>
<div class="t g" style="left:241.5px;top:37.8px;font-size:9.5px;color:#000">严思</div>
<div class="t" style="left:297.6px;top:39.0px;font-family:'Liberation Mono',monospace;font-size:10px;transform:scaleX(0.8);transform-origin:0 0;color:#000">C区</div>
<div class="t" style="left:344.0px;top:39.0px;font-family:'Liberation Mono',monospace;font-size:10px;transform:scaleX(0.8);transform-origin:0 0;color:#000">4L1F</div>
<div class="t g" style="left:392.5px;top:37.8px;font-size:9.5px;color:#000">整料</div>
<div class="t" style="left:448.5px;top:39.0px;font-family:'Liberation Mono',monospace;font-size:10px;transform:scaleX(0.8);transform-origin:0 0;color:#000">SU10...</div>
<div class="t" style="left:489.0px;top:39.0px;font-family:'Liberation Mono',monospace;font-size:10px;transform:scaleX(0.8);transform-origin:0 0;color:#000">6063-T5</div>
<div class="t g" style="left:528.5px;top:37.8px;font-size:9.5px;color:#000">贴膜</div>
<div class="t g" style="left:577.0px;top:37.8px;font-size:9.5px;color:#000">国标</div>
<div class="t g" style="left:624.7px;top:37.8px;font-size:9.5px;color:#000">广东中. . .</div>
<div class="t" style="left:672.3px;top:39.0px;font-family:'Liberation Mono',monospace;font-size:10px;transform:scaleX(0.8);transform-origin:0 0;color:#000">ZYBY607</div>
<div class="t g" style="left:719.8px;top:37.8px;font-size:9.5px;color:#000">百叶片</div>
<div class="t" style="left:767.7px;top:38.3px;font-size:10px;transform:scaleX(0.9);transform-origin:0 0;color:#000">6000</div>
<div class="t" style="left:815.7px;top:38.3px;font-size:10px;transform:scaleX(0.9);transform-origin:0 0;color:#000">130</div>
<div class="t" style="left:863.5px;top:38.3px;font-size:10px;transform:scaleX(0.9);transform-origin:0 0;color:#000">780</div>
<div class="t" style="left:911.7px;top:38.3px;font-size:9.5px;transform:scaleX(0.94);transform-origin:0 0;color:#000">2</div>
<div class="t" style="left:938.5px;top:38.3px;font-size:9.5px;transform:scaleX(0.94);transform-origin:0 0;color:#000">3</div>
<div class="t" style="left:959.8px;top:38.3px;font-size:10px;transform:scaleX(0.9);transform-origin:0 0;color:#000">535</div>
<div class="ab" style="left:0;top:51.68px;width:1000px;height:18.37px;background:#fff"></div>
<div class="t g" style="left:1.5px;top:56.2px;font-size:9.5px;color:#000">调拨出库</div>
<div class="t" style="left:65.5px;top:56.7px;font-size:10px;transform:scaleX(0.9);transform-origin:0 0;color:#000">3403</div>
<div class="t" style="left:113.5px;top:56.7px;font-size:10px;transform:scaleX(0.95);transform-origin:0 0;color:#000">2020/2/25</div>
<div class="t" style="left:178.0px;top:56.2px;font-size:9.4px;color:#000">工</div>
<div class="ab" style="left:209.0px;top:56.2px;width:30.0px;height:14px;overflow:hidden"><div class="t" style="left:0;top:0;font-size:9.4px;color:#000">共工程</div></div>
<div class="t g" style="left:241.5px;top:56.2px;font-size:9.5px;color:#000">严思</div>
<div class="t" style="left:297.6px;top:57.4px;font-family:'Liberation Mono',monospace;font-size:10px;transform:scaleX(0.8);transform-origin:0 0;color:#000">G区</div>
<div class="t" style="left:344.0px;top:57.4px;font-family:'Liberation Mono',monospace;font-size:10px;transform:scaleX(0.8);transform-origin:0 0;color:#000">1R1F</div>
<div class="t g" style="left:392.5px;top:56.2px;font-size:9.5px;color:#000">整料</div>
<div class="t g" style="left:448.5px;top:56.2px;font-size:9.5px;color:#000">光身料</div>
<div class="t" style="left:489.0px;top:57.4px;font-family:'Liberation Mono',monospace;font-size:10px;transform:scaleX(0.8);transform-origin:0 0;color:#000">6063-T5</div>
<div class="t g" style="left:528.5px;top:56.2px;font-size:9.5px;color:#000">不贴膜</div>
<div class="t g" style="left:577.0px;top:56.2px;font-size:9.5px;color:#000">国标</div>
<div class="t g" style="left:624.7px;top:56.2px;font-size:9.5px;color:#000">广东中. . .</div>
<div class="t" style="left:672.3px;top:57.4px;font-family:'Liberation Mono',monospace;font-size:10px;transform:scaleX(0.8);transform-origin:0 0;color:#000">ZYCJP5...</div>
<div class="t g" style="left:719.8px;top:56.2px;font-size:9.5px;color:#000">组角码. . .</div>
<div class="t" style="left:767.7px;top:56.7px;font-size:10px;transform:scaleX(0.9);transform-origin:0 0;color:#000">6000</div>
<div class="t" style="left:815.7px;top:56.7px;font-size:10px;transform:scaleX(0.9);transform-origin:0 0;color:#000">20</div>
<div class="t" style="left:863.5px;top:56.7px;font-size:10px;transform:scaleX(0.9);transform-origin:0 0;color:#000">120</div>
<div class="t" style="left:911.7px;top:56.7px;font-size:9.5px;transform:scaleX(0.94);transform-origin:0 0;color:#000">0</div>
<div class="t" style="left:959.8px;top:56.7px;font-size:10px;transform:scaleX(0.9);transform-origin:0 0;color:#000">0</div>
<div class="ab" style="left:0;top:70.05px;width:1000px;height:18.37px;background:#fff"></div>
<div class="t g" style="left:1.5px;top:74.5px;font-size:9.5px;color:#000">调拨出库</div>
<div class="t" style="left:65.5px;top:75.0px;font-size:10px;transform:scaleX(0.9);transform-origin:0 0;color:#000">3407</div>
<div class="t" style="left:113.5px;top:75.0px;font-size:10px;transform:scaleX(0.95);transform-origin:0 0;color:#000">2020/2/25</div>
<div class="t" style="left:178.0px;top:74.5px;font-size:9.4px;color:#000">工</div>
<div class="ab" style="left:209.0px;top:74.5px;width:30.0px;height:14px;overflow:hidden"><div class="t" style="left:0;top:0;font-size:9.4px;color:#000">共工程</div></div>
<div class="t g" style="left:241.5px;top:74.5px;font-size:9.5px;color:#000">严思</div>
<div class="t" style="left:297.6px;top:75.7px;font-family:'Liberation Mono',monospace;font-size:10px;transform:scaleX(0.8);transform-origin:0 0;color:#000">G区</div>
<div class="t" style="left:344.0px;top:75.7px;font-family:'Liberation Mono',monospace;font-size:10px;transform:scaleX(0.8);transform-origin:0 0;color:#000">1L1F</div>
<div class="t g" style="left:392.5px;top:74.5px;font-size:9.5px;color:#000">整料</div>
<div class="t g" style="left:448.5px;top:74.5px;font-size:9.5px;color:#000">光身料</div>
<div class="t" style="left:489.0px;top:75.7px;font-family:'Liberation Mono',monospace;font-size:10px;transform:scaleX(0.8);transform-origin:0 0;color:#000">6063-T5</div>
<div class="t g" style="left:528.5px;top:74.5px;font-size:9.5px;color:#000">不贴膜</div>
<div class="t g" style="left:577.0px;top:74.5px;font-size:9.5px;color:#000">国标</div>
<div class="t g" style="left:624.7px;top:74.5px;font-size:9.5px;color:#000">广东中. . .</div>
<div class="t" style="left:672.3px;top:75.7px;font-family:'Liberation Mono',monospace;font-size:10px;transform:scaleX(0.8);transform-origin:0 0;color:#000">ZYCJP5...</div>
<div class="t g" style="left:719.8px;top:74.5px;font-size:9.5px;color:#000">组角码. . .</div>
<div class="t" style="left:767.7px;top:75.0px;font-size:10px;transform:scaleX(0.9);transform-origin:0 0;color:#000">6000</div>
<div class="t" style="left:815.7px;top:75.0px;font-size:10px;transform:scaleX(0.9);transform-origin:0 0;color:#000">2</div>
<div class="t" style="left:863.5px;top:75.0px;font-size:10px;transform:scaleX(0.9);transform-origin:0 0;color:#000">12</div>
<div class="t" style="left:911.7px;top:75.0px;font-size:9.5px;transform:scaleX(0.94);transform-origin:0 0;color:#000">0</div>
<div class="t" style="left:959.8px;top:75.0px;font-size:10px;transform:scaleX(0.9);transform-origin:0 0;color:#000">0</div>
<div class="ab" style="left:0;top:88.41px;width:1000px;height:18.37px;background:#fff"></div>
<div class="t g" style="left:1.5px;top:92.9px;font-size:9.5px;color:#000">调拨出库</div>
<div class="t" style="left:65.5px;top:93.4px;font-size:10px;transform:scaleX(0.9);transform-origin:0 0;color:#000">3409</div>
<div class="t" style="left:113.5px;top:93.4px;font-size:10px;transform:scaleX(0.95);transform-origin:0 0;color:#000">2020/2/25</div>
<div class="t" style="left:178.0px;top:92.9px;font-size:9.4px;color:#000">长</div>
<div class="ab" style="left:208.0px;top:92.9px;width:30.0px;height:14px;overflow:hidden"><div class="t" style="left:0;top:0;font-size:9.4px;color:#000">国. . .</div></div>
<div class="t g" style="left:241.5px;top:92.9px;font-size:9.5px;color:#000">陈琲</div>
<div class="t" style="left:297.6px;top:94.1px;font-family:'Liberation Mono',monospace;font-size:10px;transform:scaleX(0.8);transform-origin:0 0;color:#000">B区</div>
<div class="t" style="left:344.0px;top:94.1px;font-family:'Liberation Mono',monospace;font-size:10px;transform:scaleX(0.8);transform-origin:0 0;color:#000">2R5F</div>
<div class="t g" style="left:392.5px;top:92.9px;font-size:9.5px;color:#000">整料</div>
<div class="t" style="left:448.5px;top:94.1px;font-family:'Liberation Mono',monospace;font-size:10px;transform:scaleX(0.8);transform-origin:0 0;color:#000">LI35HD</div>
<div class="t" style="left:489.0px;top:94.1px;font-family:'Liberation Mono',monospace;font-size:10px;transform:scaleX(0.8);transform-origin:0 0;color:#000">6063-T5</div>
<div class="t g" style="left:528.5px;top:92.9px;font-size:9.5px;color:#000">贴膜</div>
<div class="t g" style="left:577.0px;top:92.9px;font-size:9.5px;color:#000">国标</div>
<div class="t g" style="left:624.7px;top:92.9px;font-size:9.5px;color:#000">山东华. . .</div>
<div class="t" style="left:672.3px;top:94.1px;font-family:'Liberation Mono',monospace;font-size:10px;transform:scaleX(0.8);transform-origin:0 0;color:#000">GR55N02</div>
<div class="t g" style="left:719.8px;top:92.9px;font-size:9.5px;color:#000">窗不带. . .</div>
<div class="t" style="left:767.7px;top:93.4px;font-size:10px;transform:scaleX(0.9);transform-origin:0 0;color:#000">6000</div>
<div class="t" style="left:815.7px;top:93.4px;font-size:10px;transform:scaleX(0.9);transform-origin:0 0;color:#000">9</div>
<div class="t" style="left:863.5px;top:93.4px;font-size:10px;transform:scaleX(0.9);transform-origin:0 0;color:#000">54</div>
<div class="t" style="left:911.7px;top:93.4px;font-size:9.5px;transform:scaleX(0.94);transform-origin:0 0;color:#000">2</div>
<div class="t" style="left:938.5px;top:93.4px;font-size:9.5px;transform:scaleX(0.94);transform-origin:0 0;color:#000">537</div>
<div class="t" style="left:959.8px;top:93.4px;font-size:10px;transform:scaleX(0.9);transform-origin:0 0;color:#000">106</div>
<div class="ab" style="left:0;top:106.78px;width:1000px;height:18.37px;background:#fff"></div>
<div class="t g" style="left:1.5px;top:111.3px;font-size:9.5px;color:#000">调拨出库</div>
<div class="t" style="left:65.5px;top:111.8px;font-size:10px;transform:scaleX(0.9);transform-origin:0 0;color:#000">3413</div>
<div class="t" style="left:113.5px;top:111.8px;font-size:10px;transform:scaleX(0.95);transform-origin:0 0;color:#000">2020/2/26</div>
<div class="t" style="left:178.0px;top:111.3px;font-size:9.4px;color:#000">南</div>
<div class="ab" style="left:208.0px;top:111.3px;width:30.0px;height:14px;overflow:hidden"><div class="t" style="left:0;top:0;font-size:9.4px;color:#000">国. . .</div></div>
<div class="t g" style="left:241.5px;top:111.3px;font-size:9.5px;color:#000">严思</div>
<div class="t" style="left:297.6px;top:112.5px;font-family:'Liberation Mono',monospace;font-size:10px;transform:scaleX(0.8);transform-origin:0 0;color:#000">C区</div>
<div class="t" style="left:344.0px;top:112.5px;font-family:'Liberation Mono',monospace;font-size:10px;transform:scaleX(0.8);transform-origin:0 0;color:#000">5R3F</div>
<div class="t g" style="left:392.5px;top:111.3px;font-size:9.5px;color:#000">整料</div>
<div class="t" style="left:448.5px;top:112.5px;font-family:'Liberation Mono',monospace;font-size:10px;transform:scaleX(0.8);transform-origin:0 0;color:#000">G71422</div>
<div class="t" style="left:489.0px;top:112.5px;font-family:'Liberation Mono',monospace;font-size:10px;transform:scaleX(0.8);transform-origin:0 0;color:#000">6063-T5</div>
<div class="t g" style="left:528.5px;top:111.3px;font-size:9.5px;color:#000">贴膜</div>
<div class="t g" style="left:577.0px;top:111.3px;font-size:9.5px;color:#000">国标</div>
<div class="t g" style="left:624.7px;top:111.3px;font-size:9.5px;color:#000">广东中. . .</div>
<div class="t" style="left:672.3px;top:112.5px;font-family:'Liberation Mono',monospace;font-size:10px;transform:scaleX(0.8);transform-origin:0 0;color:#000">SQ50X2...</div>
<div class="t g" style="left:719.8px;top:111.3px;font-size:9.5px;color:#000">普铝方. . .</div>
<div class="t" style="left:767.7px;top:111.8px;font-size:10px;transform:scaleX(0.9);transform-origin:0 0;color:#000">6000</div>
<div class="t" style="left:815.7px;top:111.8px;font-size:10px;transform:scaleX(0.9);transform-origin:0 0;color:#000">4</div>
<div class="t" style="left:863.5px;top:111.8px;font-size:10px;transform:scaleX(0.9);transform-origin:0 0;color:#000">24</div>
<div class="t" style="left:911.7px;top:111.8px;font-size:9.5px;transform:scaleX(0.94);transform-origin:0 0;color:#000">2</div>
<div class="t" style="left:933.0px;top:111.8px;font-size:9.5px;transform:scaleX(0.94);transform-origin:0 0;color:#000">2972</div>
<div class="t" style="left:959.8px;top:111.8px;font-size:10px;transform:scaleX(0.9);transform-origin:0 0;color:#000">241</div>
<div class="ab" style="left:0;top:125.15px;width:1000px;height:18.37px;background:#fff"></div>
<div class="t g" style="left:1.5px;top:129.6px;font-size:9.5px;color:#000">调拨出库</div>
<div class="t" style="left:65.5px;top:130.1px;font-size:10px;transform:scaleX(0.9);transform-origin:0 0;color:#000">3424</div>
<div class="t" style="left:113.5px;top:130.1px;font-size:10px;transform:scaleX(0.95);transform-origin:0 0;color:#000">2020/2/26</div>
<div class="t" style="left:178.0px;top:129.6px;font-size:9.4px;color:#000">工</div>
<div class="ab" style="left:209.0px;top:129.6px;width:30.0px;height:14px;overflow:hidden"><div class="t" style="left:0;top:0;font-size:9.4px;color:#000">共工程</div></div>
<div class="t g" style="left:241.5px;top:129.6px;font-size:9.5px;color:#000">严思</div>
<div class="t" style="left:297.6px;top:130.8px;font-family:'Liberation Mono',monospace;font-size:10px;transform:scaleX(0.8);transform-origin:0 0;color:#000">G区</div>
<div class="t" style="left:344.0px;top:130.8px;font-family:'Liberation Mono',monospace;font-size:10px;transform:scaleX(0.8);transform-origin:0 0;color:#000">1L1F</div>
<div class="t g" style="left:392.5px;top:129.6px;font-size:9.5px;color:#000">整料</div>
<div class="t g" style="left:448.5px;top:129.6px;font-size:9.5px;color:#000">光身料</div>
<div class="t" style="left:489.0px;top:130.8px;font-family:'Liberation Mono',monospace;font-size:10px;transform:scaleX(0.8);transform-origin:0 0;color:#000">6063-T5</div>
<div class="t g" style="left:528.5px;top:129.6px;font-size:9.5px;color:#000">不贴膜</div>
<div class="t g" style="left:577.0px;top:129.6px;font-size:9.5px;color:#000">国标</div>
<div class="t g" style="left:624.7px;top:129.6px;font-size:9.5px;color:#000">广东中. . .</div>
<div class="t" style="left:672.3px;top:130.8px;font-family:'Liberation Mono',monospace;font-size:10px;transform:scaleX(0.8);transform-origin:0 0;color:#000">ZYCJP5...</div>
<div class="t g" style="left:719.8px;top:129.6px;font-size:9.5px;color:#000">组角码. . .</div>
<div class="t" style="left:767.7px;top:130.1px;font-size:10px;transform:scaleX(0.9);transform-origin:0 0;color:#000">6000</div>
<div class="t" style="left:815.7px;top:130.1px;font-size:10px;transform:scaleX(0.9);transform-origin:0 0;color:#000">20</div>
<div class="t" style="left:863.5px;top:130.1px;font-size:10px;transform:scaleX(0.9);transform-origin:0 0;color:#000">120</div>
<div class="t" style="left:911.7px;top:130.1px;font-size:9.5px;transform:scaleX(0.94);transform-origin:0 0;color:#000">0</div>
<div class="t" style="left:959.8px;top:130.1px;font-size:10px;transform:scaleX(0.9);transform-origin:0 0;color:#000">0</div>
<div class="ab" style="left:0;top:143.51px;width:1000px;height:18.37px;background:#fff"></div>
<div class="t g" style="left:1.5px;top:148.0px;font-size:9.5px;color:#000">调拨出库</div>
<div class="t" style="left:65.5px;top:148.5px;font-size:10px;transform:scaleX(0.9);transform-origin:0 0;color:#000">3428</div>
<div class="t" style="left:113.5px;top:148.5px;font-size:10px;transform:scaleX(0.95);transform-origin:0 0;color:#000">2020/2/26</div>
<div class="t" style="left:178.0px;top:148.0px;font-size:9.4px;color:#000">石</div>
<div class="ab" style="left:209.0px;top:148.0px;width:30.0px;height:14px;overflow:hidden"><div class="t" style="left:0;top:0;font-size:9.4px;color:#000">辉城</div></div>
<div class="t g" style="left:241.5px;top:148.0px;font-size:9.5px;color:#000">陈琲</div>
<div class="t" style="left:297.6px;top:149.2px;font-family:'Liberation Mono',monospace;font-size:10px;transform:scaleX(0.8);transform-origin:0 0;color:#000">G区</div>
<div class="t" style="left:344.0px;top:149.2px;font-family:'Liberation Mono',monospace;font-size:10px;transform:scaleX(0.8);transform-origin:0 0;color:#000">2L4F</div>
<div class="t g" style="left:392.5px;top:148.0px;font-size:9.5px;color:#000">整料</div>
<div class="t" style="left:448.5px;top:149.2px;font-family:'Liberation Mono',monospace;font-size:10px;transform:scaleX(0.8);transform-origin:0 0;color:#000">KLM3817</div>
<div class="t" style="left:489.0px;top:149.2px;font-family:'Liberation Mono',monospace;font-size:10px;transform:scaleX(0.8);transform-origin:0 0;color:#000">6063-T5</div>
<div class="t g" style="left:528.5px;top:148.0px;font-size:9.5px;color:#000">贴膜</div>
<div class="t g" style="left:577.0px;top:148.0px;font-size:9.5px;color:#000">国标</div>
<div class="t g" style="left:624.7px;top:148.0px;font-size:9.5px;color:#000">山东华. . .</div>
<div class="t" style="left:672.3px;top:149.2px;font-family:'Liberation Mono',monospace;font-size:10px;transform:scaleX(0.8);transform-origin:0 0;color:#000">GA90M06.</div>
<div class="t g" style="left:719.8px;top:148.0px;font-size:9.5px;color:#000">门勾企</div>
<div class="t" style="left:767.7px;top:148.5px;font-size:10px;transform:scaleX(0.9);transform-origin:0 0;color:#000">4700</div>
<div class="t" style="left:815.7px;top:148.5px;font-size:10px;transform:scaleX(0.9);transform-origin:0 0;color:#000">2</div>
<div class="t" style="left:863.5px;top:148.5px;font-size:10px;transform:scaleX(0.9);transform-origin:0 0;color:#000">9.4</div>
<div class="t" style="left:911.7px;top:148.5px;font-size:9.5px;transform:scaleX(0.94);transform-origin:0 0;color:#000">2</div>
<div class="t" style="left:938.5px;top:148.5px;font-size:9.5px;transform:scaleX(0.94);transform-origin:0 0;color:#000">468</div>
<div class="t" style="left:959.8px;top:148.5px;font-size:10px;transform:scaleX(0.9);transform-origin:0 0;color:#000">186</div>
<div class="ab" style="left:0;top:161.88px;width:1000px;height:18.37px;background:#fff"></div>
<div class="t g" style="left:1.5px;top:166.4px;font-size:9.5px;color:#000">调拨出库</div>
<div class="t" style="left:65.5px;top:166.9px;font-size:10px;transform:scaleX(0.9);transform-origin:0 0;color:#000">3429</div>
<div class="t" style="left:113.5px;top:166.9px;font-size:10px;transform:scaleX(0.95);transform-origin:0 0;color:#000">2020/2/26</div>
<div class="t" style="left:178.0px;top:166.4px;font-size:9.4px;color:#000">石</div>
<div class="ab" style="left:209.0px;top:166.4px;width:30.0px;height:14px;overflow:hidden"><div class="t" style="left:0;top:0;font-size:9.4px;color:#000">辉城</div></div>
<div class="t g" style="left:241.5px;top:166.4px;font-size:9.5px;color:#000">陈琲</div>
<div class="t" style="left:297.6px;top:167.6px;font-family:'Liberation Mono',monospace;font-size:10px;transform:scaleX(0.8);transform-origin:0 0;color:#000">G区</div>
<div class="t" style="left:344.0px;top:167.6px;font-family:'Liberation Mono',monospace;font-size:10px;transform:scaleX(0.8);transform-origin:0 0;color:#000">5R2F</div>
<div class="t g" style="left:392.5px;top:166.4px;font-size:9.5px;color:#000">整料</div>
<div class="t" style="left:448.5px;top:167.6px;font-family:'Liberation Mono',monospace;font-size:10px;transform:scaleX(0.8);transform-origin:0 0;color:#000">KLM3817</div>
<div class="t" style="left:489.0px;top:167.6px;font-family:'Liberation Mono',monospace;font-size:10px;transform:scaleX(0.8);transform-origin:0 0;color:#000">6063-T5</div>
<div class="t g" style="left:528.5px;top:166.4px;font-size:9.5px;color:#000">贴膜</div>
<div class="t g" style="left:577.0px;top:166.4px;font-size:9.5px;color:#000">国标</div>
<div class="t g" style="left:624.7px;top:166.4px;font-size:9.5px;color:#000">山东华. . .</div>
<div class="t" style="left:672.3px;top:167.6px;font-family:'Liberation Mono',monospace;font-size:10px;transform:scaleX(0.8);transform-origin:0 0;color:#000">GA90M07.</div>
<div class="t g" style="left:719.8px;top:166.4px;font-size:9.5px;color:#000">门拉手. . .</div>
<div class="t" style="left:767.7px;top:166.9px;font-size:10px;transform:scaleX(0.9);transform-origin:0 0;color:#000">4700</div>
<div class="t" style="left:815.7px;top:166.9px;font-size:10px;transform:scaleX(0.9);transform-origin:0 0;color:#000">2</div>
<div class="t" style="left:863.5px;top:166.9px;font-size:10px;transform:scaleX(0.9);transform-origin:0 0;color:#000">9.4</div>
<div class="t" style="left:911.7px;top:166.9px;font-size:9.5px;transform:scaleX(0.94);transform-origin:0 0;color:#000">2</div>
<div class="t" style="left:933.0px;top:166.9px;font-size:9.5px;transform:scaleX(0.94);transform-origin:0 0;color:#000">7872</div>
<div class="t" style="left:959.8px;top:166.9px;font-size:10px;transform:scaleX(0.9);transform-origin:0 0;color:#000">326</div>
<div class="ab" style="left:0;top:180.24px;width:1000px;height:18.37px;background:#fff"></div>
<div class="t g" style="left:1.5px;top:184.7px;font-size:9.5px;color:#000">调拨出库</div>
<div class="t" style="left:65.5px;top:185.2px;font-size:10px;transform:scaleX(0.9);transform-origin:0 0;color:#000">3430</div>
<div class="t" style="left:113.5px;top:185.2px;font-size:10px;transform:scaleX(0.95);transform-origin:0 0;color:#000">2020/2/26</div>
<div class="t" style="left:178.0px;top:184.7px;font-size:9.4px;color:#000">石</div>
<div class="ab" style="left:209.0px;top:184.7px;width:30.0px;height:14px;overflow:hidden"><div class="t" style="left:0;top:0;font-size:9.4px;color:#000">辉城</div></div>
<div class="t g" style="left:241.5px;top:184.7px;font-size:9.5px;color:#000">陈琲</div>
<div class="t" style="left:297.6px;top:185.9px;font-family:'Liberation Mono',monospace;font-size:10px;transform:scaleX(0.8);transform-origin:0 0;color:#000">G区</div>
<div class="t" style="left:344.0px;top:185.9px;font-family:'Liberation Mono',monospace;font-size:10px;transform:scaleX(0.8);transform-origin:0 0;color:#000">3L3F</div>
<div class="t g" style="left:392.5px;top:184.7px;font-size:9.5px;color:#000">整料</div>
<div class="t" style="left:448.5px;top:185.9px;font-family:'Liberation Mono',monospace;font-size:10px;transform:scaleX(0.8);transform-origin:0 0;color:#000">KLM3817</div>
<div class="t" style="left:489.0px;top:185.9px;font-family:'Liberation Mono',monospace;font-size:10px;transform:scaleX(0.8);transform-origin:0 0;color:#000">6063-T5</div>
<div class="t g" style="left:528.5px;top:184.7px;font-size:9.5px;color:#000">贴膜</div>
<div class="t g" style="left:577.0px;top:184.7px;font-size:9.5px;color:#000">国标</div>
<div class="t g" style="left:624.7px;top:184.7px;font-size:9.5px;color:#000">山东华. . .</div>
<div class="t" style="left:672.3px;top:185.9px;font-family:'Liberation Mono',monospace;font-size:10px;transform:scaleX(0.8);transform-origin:0 0;color:#000">GA90M08.</div>
<div class="t g" style="left:719.8px;top:184.7px;font-size:9.5px;color:#000">门上方</div>
<div class="t" style="left:767.7px;top:185.2px;font-size:10px;transform:scaleX(0.9);transform-origin:0 0;color:#000">6000</div>
<div class="t" style="left:815.7px;top:185.2px;font-size:10px;transform:scaleX(0.9);transform-origin:0 0;color:#000">4</div>
<div class="t" style="left:863.5px;top:185.2px;font-size:10px;transform:scaleX(0.9);transform-origin:0 0;color:#000">24</div>
<div class="t" style="left:911.7px;top:185.2px;font-size:9.5px;transform:scaleX(0.94);transform-origin:0 0;color:#000">2</div>
<div class="t" style="left:938.5px;top:185.2px;font-size:9.5px;transform:scaleX(0.94);transform-origin:0 0;color:#000">75</div>
<div class="t" style="left:959.8px;top:185.2px;font-size:10px;transform:scaleX(0.9);transform-origin:0 0;color:#000">439</div>
<div class="ab" style="left:0;top:198.61px;width:1000px;height:18.37px;background:#fff"></div>
<div class="t" style="left:297.6px;top:204.3px;font-family:'Liberation Mono',monospace;font-size:10px;transform:scaleX(0.8);transform-origin:0 0;color:#000">G区</div>
<div class="t" style="left:344.0px;top:204.3px;font-family:'Liberation Mono',monospace;font-size:10px;transform:scaleX(0.8);transform-origin:0 0;color:#000">3L3F</div>
<div class="t g" style="left:392.5px;top:203.1px;font-size:9.5px;color:#000">整料</div>
<div class="t" style="left:448.5px;top:204.3px;font-family:'Liberation Mono',monospace;font-size:10px;transform:scaleX(0.8);transform-origin:0 0;color:#000">KLM3817</div>
<div class="t" style="left:489.0px;top:204.3px;font-family:'Liberation Mono',monospace;font-size:10px;transform:scaleX(0.8);transform-origin:0 0;color:#000">6063-T5</div>
<div class="t g" style="left:528.5px;top:203.1px;font-size:9.5px;color:#000">贴膜</div>
<div class="t g" style="left:577.0px;top:203.1px;font-size:9.5px;color:#000">国标</div>
<div class="t g" style="left:624.7px;top:203.1px;font-size:9.5px;color:#000">山东华. . .</div>
<div class="t" style="left:672.3px;top:204.3px;font-family:'Liberation Mono',monospace;font-size:10px;transform:scaleX(0.8);transform-origin:0 0;color:#000">GA90M09.</div>
<div class="t g" style="left:719.8px;top:203.1px;font-size:9.5px;color:#000">门下方</div>
<div class="t" style="left:767.7px;top:203.6px;font-size:10px;transform:scaleX(0.9);transform-origin:0 0;color:#000">6000</div>
<div class="t" style="left:815.7px;top:203.6px;font-size:10px;transform:scaleX(0.9);transform-origin:0 0;color:#000">4</div>
<div class="t" style="left:863.5px;top:203.6px;font-size:10px;transform:scaleX(0.9);transform-origin:0 0;color:#000">24</div>
<div class="t" style="left:911.7px;top:203.6px;font-size:9.5px;transform:scaleX(0.94);transform-origin:0 0;color:#000">2</div>
<div class="t" style="left:938.5px;top:203.6px;font-size:9.5px;transform:scaleX(0.94);transform-origin:0 0;color:#000">75</div>
<div class="t" style="left:959.8px;top:203.6px;font-size:10px;transform:scaleX(0.9);transform-origin:0 0;color:#000">423</div>
<div class="ab" style="left:0;top:216.98px;width:1000px;height:18.37px;background:#fff"></div>
<div class="t g" style="left:1.5px;top:221.5px;font-size:9.5px;color:#000">调拨出库</div>
<div class="t" style="left:65.5px;top:222.0px;font-size:10px;transform:scaleX(0.9);transform-origin:0 0;color:#000">3437</div>
<div class="t" style="left:113.5px;top:222.0px;font-size:10px;transform:scaleX(0.95);transform-origin:0 0;color:#000">2020/2/27</div>
<div class="t" style="left:178.0px;top:221.5px;font-size:9.4px;color:#000">佛</div>
<div class="ab" style="left:208.0px;top:221.5px;width:30.0px;height:14px;overflow:hidden"><div class="t" style="left:0;top:0;font-size:9.4px;color:#000">县. . .</div></div>
<div class="t g" style="left:241.5px;top:221.5px;font-size:9.5px;color:#000">陈琲</div>
<div class="t" style="left:297.6px;top:222.7px;font-family:'Liberation Mono',monospace;font-size:10px;transform:scaleX(0.8);transform-origin:0 0;color:#000">B区</div>
<div class="t" style="left:344.0px;top:222.7px;font-family:'Liberation Mono',monospace;font-size:10px;transform:scaleX(0.8);transform-origin:0 0;color:#000">3R6F</div>
<div class="t g" style="left:392.5px;top:221.5px;font-size:9.5px;color:#000">整料</div>
<div class="t" style="left:448.5px;top:222.7px;font-family:'Liberation Mono',monospace;font-size:10px;transform:scaleX(0.8);transform-origin:0 0;color:#000">PW05</div>
<div class="t" style="left:489.0px;top:222.7px;font-family:'Liberation Mono',monospace;font-size:10px;transform:scaleX(0.8);transform-origin:0 0;color:#000">6063-T5</div>
<div class="t g" style="left:528.5px;top:221.5px;font-size:9.5px;color:#000">贴膜</div>
<div class="t g" style="left:577.0px;top:221.5px;font-size:9.5px;color:#000">国标</div>
<div class="t g" style="left:624.7px;top:221.5px;font-size:9.5px;color:#000">广东兴. . .</div>
<div class="t" style="left:672.3px;top:222.7px;font-family:'Liberation Mono',monospace;font-size:10px;transform:scaleX(0.8);transform-origin:0 0;color:#000">C28540B</div>
<div class="t g" style="left:719.8px;top:221.5px;font-size:9.5px;color:#000">90度转角</div>
<div class="t" style="left:767.7px;top:222.0px;font-size:10px;transform:scaleX(0.9);transform-origin:0 0;color:#000">5000</div>
<div class="t" style="left:815.7px;top:222.0px;font-size:10px;transform:scaleX(0.9);transform-origin:0 0;color:#000">2</div>
<div class="t" style="left:863.5px;top:222.0px;font-size:10px;transform:scaleX(0.9);transform-origin:0 0;color:#000">10</div>
<div class="t" style="left:911.7px;top:222.0px;font-size:9.5px;transform:scaleX(0.94);transform-origin:0 0;color:#000">2</div>
<div class="t" style="left:938.5px;top:222.0px;font-size:9.5px;transform:scaleX(0.94);transform-origin:0 0;color:#000">2</div>
<div class="t" style="left:959.8px;top:222.0px;font-size:10px;transform:scaleX(0.9);transform-origin:0 0;color:#000">218</div>
<div class="ab" style="left:0;top:235.34px;width:1000px;height:18.37px;background:#fff"></div>
<div class="t g" style="left:1.5px;top:239.8px;font-size:9.5px;color:#000">调拨出库</div>
<div class="t" style="left:65.5px;top:240.3px;font-size:10px;transform:scaleX(0.9);transform-origin:0 0;color:#000">3445</div>
<div class="t" style="left:113.5px;top:240.3px;font-size:10px;transform:scaleX(0.95);transform-origin:0 0;color:#000">2020/2/27</div>
<div class="t" style="left:178.0px;top:239.8px;font-size:9.4px;color:#000">工</div>
<div class="ab" style="left:209.0px;top:239.8px;width:30.0px;height:14px;overflow:hidden"><div class="t" style="left:0;top:0;font-size:9.4px;color:#000">共工程</div></div>
<div class="t g" style="left:241.5px;top:239.8px;font-size:9.5px;color:#000">严思</div>
<div class="t" style="left:297.6px;top:241.0px;font-family:'Liberation Mono',monospace;font-size:10px;transform:scaleX(0.8);transform-origin:0 0;color:#000">F区</div>
<div class="t" style="left:344.0px;top:241.0px;font-family:'Liberation Mono',monospace;font-size:10px;transform:scaleX(0.8);transform-origin:0 0;color:#000">5R1F</div>
<div class="t g" style="left:392.5px;top:239.8px;font-size:9.5px;color:#000">整料</div>
<div class="t g" style="left:448.5px;top:239.8px;font-size:9.5px;color:#000">光身料</div>
<div class="t" style="left:489.0px;top:241.0px;font-family:'Liberation Mono',monospace;font-size:10px;transform:scaleX(0.8);transform-origin:0 0;color:#000">6063-T5</div>
<div class="t g" style="left:528.5px;top:239.8px;font-size:9.5px;color:#000">不贴膜</div>
<div class="t g" style="left:577.0px;top:239.8px;font-size:9.5px;color:#000">国标</div>
<div class="t g" style="left:624.7px;top:239.8px;font-size:9.5px;color:#000">山东南. . .</div>
<div class="t" style="left:672.3px;top:241.0px;font-family:'Liberation Mono',monospace;font-size:10px;transform:scaleX(0.8);transform-origin:0 0;color:#000">GA50C27</div>
<div class="t g" style="left:719.8px;top:239.8px;font-size:9.5px;color:#000">组角码. . .</div>
<div class="t" style="left:767.7px;top:240.3px;font-size:10px;transform:scaleX(0.9);transform-origin:0 0;color:#000">6000</div>
<div class="t" style="left:815.7px;top:240.3px;font-size:10px;transform:scaleX(0.9);transform-origin:0 0;color:#000">4</div>
<div class="t" style="left:863.5px;top:240.3px;font-size:10px;transform:scaleX(0.9);transform-origin:0 0;color:#000">24</div>
<div class="t" style="left:911.7px;top:240.3px;font-size:9.5px;transform:scaleX(0.94);transform-origin:0 0;color:#000">0</div>
<div class="t" style="left:959.8px;top:240.3px;font-size:10px;transform:scaleX(0.9);transform-origin:0 0;color:#000">0</div>
<div class="ab" style="left:0;top:253.71px;width:1000px;height:18.37px;background:#fff"></div>
<div class="t g" style="left:1.5px;top:258.2px;font-size:9.5px;color:#000">调拨出库</div>
<div class="t" style="left:65.5px;top:258.7px;font-size:10px;transform:scaleX(0.9);transform-origin:0 0;color:#000">3454</div>
<div class="t" style="left:113.5px;top:258.7px;font-size:10px;transform:scaleX(0.95);transform-origin:0 0;color:#000">2020/2/28</div>
<div class="t" style="left:178.0px;top:258.2px;font-size:9.4px;color:#000">工</div>
<div class="ab" style="left:209.0px;top:258.2px;width:30.0px;height:14px;overflow:hidden"><div class="t" style="left:0;top:0;font-size:9.4px;color:#000">共工程</div></div>
<div class="t g" style="left:241.5px;top:258.2px;font-size:9.5px;color:#000">严思</div>
<div class="t" style="left:297.6px;top:259.4px;font-family:'Liberation Mono',monospace;font-size:10px;transform:scaleX(0.8);transform-origin:0 0;color:#000">G区</div>
<div class="t" style="left:344.0px;top:259.4px;font-family:'Liberation Mono',monospace;font-size:10px;transform:scaleX(0.8);transform-origin:0 0;color:#000">1R1F</div>
<div class="t g" style="left:392.5px;top:258.2px;font-size:9.5px;color:#000">整料</div>
<div class="t g" style="left:448.5px;top:258.2px;font-size:9.5px;color:#000">光身料</div>
<div class="t" style="left:489.0px;top:259.4px;font-family:'Liberation Mono',monospace;font-size:10px;transform:scaleX(0.8);transform-origin:0 0;color:#000">6063-T5</div>
<div class="t g" style="left:528.5px;top:258.2px;font-size:9.5px;color:#000">不贴膜</div>
<div class="t g" style="left:577.0px;top:258.2px;font-size:9.5px;color:#000">国标</div>
<div class="t g" style="left:624.7px;top:258.2px;font-size:9.5px;color:#000">广东中. . .</div>
<div class="t" style="left:672.3px;top:259.4px;font-family:'Liberation Mono',monospace;font-size:10px;transform:scaleX(0.8);transform-origin:0 0;color:#000">ZYCJP5...</div>
<div class="t g" style="left:719.8px;top:258.2px;font-size:9.5px;color:#000">组角码. . .</div>
<div class="t" style="left:767.7px;top:258.7px;font-size:10px;transform:scaleX(0.9);transform-origin:0 0;color:#000">6000</div>
<div class="t" style="left:815.7px;top:258.7px;font-size:10px;transform:scaleX(0.9);transform-origin:0 0;color:#000">30</div>
<div class="t" style="left:863.5px;top:258.7px;font-size:10px;transform:scaleX(0.9);transform-origin:0 0;color:#000">180</div>
<div class="t" style="left:911.7px;top:258.7px;font-size:9.5px;transform:scaleX(0.94);transform-origin:0 0;color:#000">0</div>
<div class="t" style="left:959.8px;top:258.7px;font-size:10px;transform:scaleX(0.9);transform-origin:0 0;color:#000">0</div>
<div class="ab" style="left:0;top:272.07px;width:1000px;height:18.37px;background:#fff"></div>
<div class="t g" style="left:1.5px;top:276.6px;font-size:9.5px;color:#000">调拨出库</div>
<div class="t" style="left:65.5px;top:277.1px;font-size:10px;transform:scaleX(0.9);transform-origin:0 0;color:#000">3458</div>
<div class="t" style="left:113.5px;top:277.1px;font-size:10px;transform:scaleX(0.95);transform-origin:0 0;color:#000">2020/2/28</div>
<div class="t" style="left:178.0px;top:276.6px;font-size:9.4px;color:#000">华</div>
<div class="ab" style="left:208.0px;top:276.6px;width:30.0px;height:14px;overflow:hidden"><div class="t" style="left:0;top:0;font-size:9.4px;color:#000">源. . .</div></div>
<div class="t g" style="left:241.5px;top:276.6px;font-size:9.5px;color:#000">陈琲</div>
<div class="t" style="left:297.6px;top:277.8px;font-family:'Liberation Mono',monospace;font-size:10px;transform:scaleX(0.8);transform-origin:0 0;color:#000">C区</div>
<div class="t" style="left:344.0px;top:277.8px;font-family:'Liberation Mono',monospace;font-size:10px;transform:scaleX(0.8);transform-origin:0 0;color:#000">4L1F</div>
<div class="t g" style="left:392.5px;top:276.6px;font-size:9.5px;color:#000">整料</div>
<div class="t g" style="left:448.5px;top:276.6px;font-size:9.5px;color:#000">光身料</div>
<div class="t" style="left:489.0px;top:277.8px;font-family:'Liberation Mono',monospace;font-size:10px;transform:scaleX(0.8);transform-origin:0 0;color:#000">6063-T5</div>
<div class="t g" style="left:528.5px;top:276.6px;font-size:9.5px;color:#000">贴膜</div>
<div class="t g" style="left:577.0px;top:276.6px;font-size:9.5px;color:#000">国标</div>
<div class="t g" style="left:624.7px;top:276.6px;font-size:9.5px;color:#000">广亚铝. . .</div>
<div class="t" style="left:672.3px;top:277.8px;font-family:'Liberation Mono',monospace;font-size:10px;transform:scaleX(0.8);transform-origin:0 0;color:#000">L-1106</div>
<div class="t g" style="left:719.8px;top:276.6px;font-size:9.5px;color:#000">幕墙全. . .</div>
<div class="t" style="left:767.7px;top:277.1px;font-size:10px;transform:scaleX(0.9);transform-origin:0 0;color:#000">6000</div>
<div class="t" style="left:815.7px;top:277.1px;font-size:10px;transform:scaleX(0.9);transform-origin:0 0;color:#000">12</div>
<div class="t" style="left:863.5px;top:277.1px;font-size:10px;transform:scaleX(0.9);transform-origin:0 0;color:#000">72</div>
<div class="t" style="left:911.7px;top:277.1px;font-size:9.5px;transform:scaleX(0.94);transform-origin:0 0;color:#000">2</div>
<div class="t" style="left:933.0px;top:277.1px;font-size:9.5px;transform:scaleX(0.94);transform-origin:0 0;color:#000">7916</div>
<div class="t" style="left:959.8px;top:277.1px;font-size:10px;transform:scaleX(0.9);transform-origin:0 0;color:#000">123</div>
<div class="ab" style="left:0;top:290.44px;width:1000px;height:18.37px;background:#fff"></div>
<div class="t g" style="left:1.5px;top:294.9px;font-size:9.5px;color:#000">调拨出库</div>
<div class="t" style="left:65.5px;top:295.4px;font-size:10px;transform:scaleX(0.9);transform-origin:0 0;color:#000">3461</div>
<div class="t" style="left:113.5px;top:295.4px;font-size:10px;transform:scaleX(0.95);transform-origin:0 0;color:#000">2020/2/28</div>
<div class="t" style="left:178.0px;top:294.9px;font-size:9.4px;color:#000">华</div>
<div class="ab" style="left:208.0px;top:294.9px;width:30.0px;height:14px;overflow:hidden"><div class="t" style="left:0;top:0;font-size:9.4px;color:#000">源. . .</div></div>
<div class="t g" style="left:241.5px;top:294.9px;font-size:9.5px;color:#000">陈琲</div>
<div class="t" style="left:297.6px;top:296.1px;font-family:'Liberation Mono',monospace;font-size:10px;transform:scaleX(0.8);transform-origin:0 0;color:#000">B区</div>
<div class="t" style="left:344.0px;top:296.1px;font-family:'Liberation Mono',monospace;font-size:10px;transform:scaleX(0.8);transform-origin:0 0;color:#000">1R2F</div>
<div class="t g" style="left:392.5px;top:294.9px;font-size:9.5px;color:#000">整料</div>
<div class="t" style="left:448.5px;top:296.1px;font-family:'Liberation Mono',monospace;font-size:10px;transform:scaleX(0.8);transform-origin:0 0;color:#000">F8877FT</div>
<div class="t" style="left:489.0px;top:296.1px;font-family:'Liberation Mono',monospace;font-size:10px;transform:scaleX(0.8);transform-origin:0 0;color:#000">6063-T5</div>
<div class="t g" style="left:528.5px;top:294.9px;font-size:9.5px;color:#000">贴膜</div>
<div class="t g" style="left:577.0px;top:294.9px;font-size:9.5px;color:#000">国标</div>
<div class="t g" style="left:624.7px;top:294.9px;font-size:9.5px;color:#000">广东中. . .</div>
<div class="t" style="left:672.3px;top:296.1px;font-family:'Liberation Mono',monospace;font-size:10px;transform:scaleX(0.8);transform-origin:0 0;color:#000">SQ5050T20</div>
<div class="t g" style="left:719.8px;top:294.9px;font-size:9.5px;color:#000">普通方. . .</div>
<div class="t" style="left:767.7px;top:295.4px;font-size:10px;transform:scaleX(0.9);transform-origin:0 0;color:#000">4300</div>
<div class="t" style="left:815.7px;top:295.4px;font-size:10px;transform:scaleX(0.9);transform-origin:0 0;color:#000">108</div>
<div class="t" style="left:863.5px;top:295.4px;font-size:10px;transform:scaleX(0.9);transform-origin:0 0;color:#000">464.4</div>
<div class="t" style="left:911.7px;top:295.4px;font-size:9.5px;transform:scaleX(0.94);transform-origin:0 0;color:#000">2</div>
<div class="t" style="left:938.5px;top:295.4px;font-size:9.5px;transform:scaleX(0.94);transform-origin:0 0;color:#000">306</div>
<div class="t" style="left:959.8px;top:295.4px;font-size:10px;transform:scaleX(0.9);transform-origin:0 0;color:#000">998</div>
<div class="ab" style="left:0;top:308.81px;width:1000px;height:18.37px;background:#fff"></div>
<div class="t g" style="left:1.5px;top:313.3px;font-size:9.5px;color:#000">调拨出库</div>
<div class="t" style="left:65.5px;top:313.8px;font-size:10px;transform:scaleX(0.9);transform-origin:0 0;color:#000">3493</div>
<div class="t" style="left:113.5px;top:313.8px;font-size:10px;transform:scaleX(0.95);transform-origin:0 0;color:#000">2020/3/2</div>
<div class="t" style="left:178.0px;top:313.3px;font-size:9.4px;color:#000">华</div>
<div class="ab" style="left:208.0px;top:313.3px;width:30.0px;height:14px;overflow:hidden"><div class="t" style="left:0;top:0;font-size:9.4px;color:#000">源. . .</div></div>
<div class="t g" style="left:241.5px;top:313.3px;font-size:9.5px;color:#000">陈琲</div>
<div class="t" style="left:297.6px;top:314.5px;font-family:'Liberation Mono',monospace;font-size:10px;transform:scaleX(0.8);transform-origin:0 0;color:#000">C区</div>
<div class="t" style="left:344.0px;top:314.5px;font-family:'Liberation Mono',monospace;font-size:10px;transform:scaleX(0.8);transform-origin:0 0;color:#000">1L1F</div>
<div class="t g" style="left:392.5px;top:313.3px;font-size:9.5px;color:#000">整料</div>
<div class="t g" style="left:448.5px;top:313.3px;font-size:9.5px;color:#000">黑色</div>
<div class="t g" style="left:489.0px;top:313.3px;font-size:9.5px;color:#000">塑料</div>
<div class="t g" style="left:528.5px;top:313.3px;font-size:9.5px;color:#000">不贴膜</div>
<div class="t g" style="left:577.0px;top:313.3px;font-size:9.5px;color:#000">国标</div>
<div class="t g" style="left:624.7px;top:313.3px;font-size:9.5px;color:#000">湖南百. . .</div>
<div class="t" style="left:672.3px;top:314.5px;font-family:'Liberation Mono',monospace;font-size:10px;transform:scaleX(0.8);transform-origin:0 0;color:#000">SG055Z</div>
<div class="t g" style="left:719.8px;top:313.3px;font-size:9.5px;color:#000">勾企硬. . .</div>
<div class="t" style="left:767.7px;top:313.8px;font-size:10px;transform:scaleX(0.9);transform-origin:0 0;color:#000">2800</div>
<div class="t" style="left:815.7px;top:313.8px;font-size:10px;transform:scaleX(0.9);transform-origin:0 0;color:#000">26</div>
<div class="t" style="left:863.5px;top:313.8px;font-size:10px;transform:scaleX(0.9);transform-origin:0 0;color:#000">72.8</div>
<div class="t" style="left:911.7px;top:313.8px;font-size:9.5px;transform:scaleX(0.94);transform-origin:0 0;color:#000">0</div>
<div class="t" style="left:959.8px;top:313.8px;font-size:10px;transform:scaleX(0.9);transform-origin:0 0;color:#000">182</div>
<div class="ab" style="left:0;top:327.17px;width:1000px;height:18.37px;background:#fff"></div>
<div class="t g" style="left:1.5px;top:331.7px;font-size:9.5px;color:#000">调拨出库</div>
<div class="t" style="left:65.5px;top:332.2px;font-size:10px;transform:scaleX(0.9);transform-origin:0 0;color:#000">3494</div>
<div class="t" style="left:113.5px;top:332.2px;font-size:10px;transform:scaleX(0.95);transform-origin:0 0;color:#000">2020/3/2</div>
<div class="t" style="left:178.0px;top:331.7px;font-size:9.4px;color:#000">石</div>
<div class="ab" style="left:209.0px;top:331.7px;width:30.0px;height:14px;overflow:hidden"><div class="t" style="left:0;top:0;font-size:9.4px;color:#000">辉城</div></div>
<div class="t g" style="left:241.5px;top:331.7px;font-size:9.5px;color:#000">汤伟</div>
<div class="t" style="left:297.6px;top:332.9px;font-family:'Liberation Mono',monospace;font-size:10px;transform:scaleX(0.8);transform-origin:0 0;color:#000">H区</div>
<div class="t" style="left:344.0px;top:332.9px;font-family:'Liberation Mono',monospace;font-size:10px;transform:scaleX(0.8);transform-origin:0 0;color:#000">5R1F</div>
<div class="t g" style="left:392.5px;top:331.7px;font-size:9.5px;color:#000">整料</div>
<div class="t g" style="left:448.5px;top:331.7px;font-size:9.5px;color:#000">光身料</div>
<div class="t" style="left:489.0px;top:332.9px;font-family:'Liberation Mono',monospace;font-size:10px;transform:scaleX(0.8);transform-origin:0 0;color:#000">6063-T5</div>
<div class="t g" style="left:528.5px;top:331.7px;font-size:9.5px;color:#000">贴膜</div>
<div class="t g" style="left:577.0px;top:331.7px;font-size:9.5px;color:#000">国标</div>
<div class="t g" style="left:624.7px;top:331.7px;font-size:9.5px;color:#000">山东华. . .</div>
<div class="t" style="left:672.3px;top:332.9px;font-family:'Liberation Mono',monospace;font-size:10px;transform:scaleX(0.8);transform-origin:0 0;color:#000">GR55A11</div>
<div class="t g" style="left:719.8px;top:331.7px;font-size:9.5px;color:#000">组角码. . .</div>
<div class="t" style="left:767.7px;top:332.2px;font-size:10px;transform:scaleX(0.9);transform-origin:0 0;color:#000">6000</div>
<div class="t" style="left:815.7px;top:332.2px;font-size:10px;transform:scaleX(0.9);transform-origin:0 0;color:#000">16</div>
<div class="t" style="left:863.5px;top:332.2px;font-size:10px;transform:scaleX(0.9);transform-origin:0 0;color:#000">96</div>
<div class="t" style="left:911.7px;top:332.2px;font-size:9.5px;transform:scaleX(0.94);transform-origin:0 0;color:#000">2</div>
<div class="t" style="left:933.0px;top:332.2px;font-size:9.5px;transform:scaleX(0.94);transform-origin:0 0;color:#000">2812</div>
<div class="t" style="left:959.8px;top:332.2px;font-size:10px;transform:scaleX(0.9);transform-origin:0 0;color:#000">411</div>
<div class="ab" style="left:0;top:345.54px;width:1000px;height:18.37px;background:#fff"></div>
<div class="t g" style="left:1.5px;top:350.0px;font-size:9.5px;color:#000">调拨出库</div>
<div class="t" style="left:65.5px;top:350.5px;font-size:10px;transform:scaleX(0.9);transform-origin:0 0;color:#000">3500</div>
<div class="t" style="left:113.5px;top:350.5px;font-size:10px;transform:scaleX(0.95);transform-origin:0 0;color:#000">2020/3/3</div>
<div class="t" style="left:178.0px;top:350.0px;font-size:9.4px;color:#000">工</div>
<div class="ab" style="left:209.0px;top:350.0px;width:30.0px;height:14px;overflow:hidden"><div class="t" style="left:0;top:0;font-size:9.4px;color:#000">共工程</div></div>
<div class="t g" style="left:241.5px;top:350.0px;font-size:9.5px;color:#000">曹佳</div>
<div class="t" style="left:297.6px;top:351.2px;font-family:'Liberation Mono',monospace;font-size:10px;transform:scaleX(0.8);transform-origin:0 0;color:#000">D区</div>
<div class="t" style="left:344.0px;top:351.2px;font-family:'Liberation Mono',monospace;font-size:10px;transform:scaleX(0.8);transform-origin:0 0;color:#000">3L1F</div>
<div class="t g" style="left:392.5px;top:350.0px;font-size:9.5px;color:#000">整料</div>
<div class="t" style="left:448.5px;top:351.2px;font-family:'Liberation Mono',monospace;font-size:10px;transform:scaleX(0.8);transform-origin:0 0;color:#000">LT3P60</div>
<div class="t" style="left:489.0px;top:351.2px;font-family:'Liberation Mono',monospace;font-size:10px;transform:scaleX(0.8);transform-origin:0 0;color:#000">6063-T5</div>
<div class="t g" style="left:528.5px;top:350.0px;font-size:9.5px;color:#000">贴膜</div>
<div class="t g" style="left:577.0px;top:350.0px;font-size:9.5px;color:#000">国标</div>
<div class="t g" style="left:624.7px;top:350.0px;font-size:9.5px;color:#000">山东华. . .</div>
<div class="t" style="left:672.3px;top:351.2px;font-family:'Liberation Mono',monospace;font-size:10px;transform:scaleX(0.8);transform-origin:0 0;color:#000">GR55N26</div>
<div class="t g" style="left:719.8px;top:350.0px;font-size:9.5px;color:#000">窗外开. . .</div>
<div class="t" style="left:767.7px;top:350.5px;font-size:10px;transform:scaleX(0.9);transform-origin:0 0;color:#000">6000</div>
<div class="t" style="left:815.7px;top:350.5px;font-size:10px;transform:scaleX(0.9);transform-origin:0 0;color:#000">166</div>
<div class="t" style="left:863.5px;top:350.5px;font-size:10px;transform:scaleX(0.9);transform-origin:0 0;color:#000">996</div>
<div class="t" style="left:911.7px;top:350.5px;font-size:9.5px;transform:scaleX(0.94);transform-origin:0 0;color:#000">0</div>
<div class="t" style="left:959.8px;top:350.5px;font-size:10px;transform:scaleX(0.9);transform-origin:0 0;color:#000">0</div>
<div class="ab" style="left:0;top:363.90px;width:1000px;height:18.37px;background:#fff"></div>
<div class="t g" style="left:1.5px;top:368.4px;font-size:9.5px;color:#000">调拨出库</div>
<div class="t" style="left:65.5px;top:368.9px;font-size:10px;transform:scaleX(0.9);transform-origin:0 0;color:#000">3510</div>
<div class="t" style="left:113.5px;top:368.9px;font-size:10px;transform:scaleX(0.95);transform-origin:0 0;color:#000">2020/3/4</div>
<div class="t" style="left:178.0px;top:368.4px;font-size:9.4px;color:#000">工</div>
<div class="ab" style="left:209.0px;top:368.4px;width:30.0px;height:14px;overflow:hidden"><div class="t" style="left:0;top:0;font-size:9.4px;color:#000">共工程</div></div>
<div class="t g" style="left:241.5px;top:368.4px;font-size:9.5px;color:#000">陈琲</div>
<div class="t" style="left:297.6px;top:369.6px;font-family:'Liberation Mono',monospace;font-size:10px;transform:scaleX(0.8);transform-origin:0 0;color:#000">F区</div>
<div class="t" style="left:344.0px;top:369.6px;font-family:'Liberation Mono',monospace;font-size:10px;transform:scaleX(0.8);transform-origin:0 0;color:#000">5R1F</div>
<div class="t g" style="left:392.5px;top:368.4px;font-size:9.5px;color:#000">整料</div>
<div class="t g" style="left:448.5px;top:368.4px;font-size:9.5px;color:#000">光身料</div>
<div class="t" style="left:489.0px;top:369.6px;font-family:'Liberation Mono',monospace;font-size:10px;transform:scaleX(0.8);transform-origin:0 0;color:#000">6063-T5</div>
<div class="t g" style="left:528.5px;top:368.4px;font-size:9.5px;color:#000">不贴膜</div>
<div class="t g" style="left:577.0px;top:368.4px;font-size:9.5px;color:#000">国标</div>
<div class="t g" style="left:624.7px;top:368.4px;font-size:9.5px;color:#000">山东南. . .</div>
<div class="t" style="left:672.3px;top:369.6px;font-family:'Liberation Mono',monospace;font-size:10px;transform:scaleX(0.8);transform-origin:0 0;color:#000">GA50C37</div>
<div class="t g" style="left:719.8px;top:368.4px;font-size:9.5px;color:#000">组角码. . .</div>
<div class="t" style="left:767.7px;top:368.9px;font-size:10px;transform:scaleX(0.9);transform-origin:0 0;color:#000">6000</div>
<div class="t" style="left:815.7px;top:368.9px;font-size:10px;transform:scaleX(0.9);transform-origin:0 0;color:#000">10</div>
<div class="t" style="left:863.5px;top:368.9px;font-size:10px;transform:scaleX(0.9);transform-origin:0 0;color:#000">60</div>
<div class="t" style="left:911.7px;top:368.9px;font-size:9.5px;transform:scaleX(0.94);transform-origin:0 0;color:#000">0</div>
<div class="t" style="left:959.8px;top:368.9px;font-size:10px;transform:scaleX(0.9);transform-origin:0 0;color:#000">0</div>
<div class="ab" style="left:0;top:382.27px;width:1000px;height:18.37px;background:#fff"></div>
<div class="t g" style="left:1.5px;top:386.8px;font-size:9.5px;color:#000">调拨出库</div>
<div class="t" style="left:65.5px;top:387.3px;font-size:10px;transform:scaleX(0.9);transform-origin:0 0;color:#000">3512</div>
<div class="t" style="left:113.5px;top:387.3px;font-size:10px;transform:scaleX(0.95);transform-origin:0 0;color:#000">2020/3/4</div>
<div class="t" style="left:178.0px;top:386.8px;font-size:9.4px;color:#000">工</div>
<div class="ab" style="left:209.0px;top:386.8px;width:30.0px;height:14px;overflow:hidden"><div class="t" style="left:0;top:0;font-size:9.4px;color:#000">共工程</div></div>
<div class="t g" style="left:241.5px;top:386.8px;font-size:9.5px;color:#000">陈琲</div>
<div class="t" style="left:297.6px;top:388.0px;font-family:'Liberation Mono',monospace;font-size:10px;transform:scaleX(0.8);transform-origin:0 0;color:#000">F区</div>
<div class="t" style="left:344.0px;top:388.0px;font-family:'Liberation Mono',monospace;font-size:10px;transform:scaleX(0.8);transform-origin:0 0;color:#000">1L2F</div>
<div class="t g" style="left:392.5px;top:386.8px;font-size:9.5px;color:#000">整料</div>
<div class="t g" style="left:448.5px;top:386.8px;font-size:9.5px;color:#000">光身料</div>
<div class="t" style="left:489.0px;top:388.0px;font-family:'Liberation Mono',monospace;font-size:10px;transform:scaleX(0.8);transform-origin:0 0;color:#000">6063-T5</div>
<div class="t g" style="left:528.5px;top:386.8px;font-size:9.5px;color:#000">不贴膜</div>
<div class="t g" style="left:577.0px;top:386.8px;font-size:9.5px;color:#000">国标</div>
<div class="t g" style="left:624.7px;top:386.8px;font-size:9.5px;color:#000">广东中. . .</div>
<div class="t" style="left:672.3px;top:388.0px;font-family:'Liberation Mono',monospace;font-size:10px;transform:scaleX(0.8);transform-origin:0 0;color:#000">AN50X50X2</div>
<div class="t g" style="left:719.8px;top:386.8px;font-size:9.5px;color:#000">L型角. . .</div>
<div class="t" style="left:767.7px;top:387.3px;font-size:10px;transform:scaleX(0.9);transform-origin:0 0;color:#000">6000</div>
<div class="t" style="left:815.7px;top:387.3px;font-size:10px;transform:scaleX(0.9);transform-origin:0 0;color:#000">10</div>
<div class="t" style="left:863.5px;top:387.3px;font-size:10px;transform:scaleX(0.9);transform-origin:0 0;color:#000">60</div>
<div class="t" style="left:911.7px;top:387.3px;font-size:9.5px;transform:scaleX(0.94);transform-origin:0 0;color:#000">0</div>
<div class="t" style="left:959.8px;top:387.3px;font-size:10px;transform:scaleX(0.9);transform-origin:0 0;color:#000">0</div>
<div class="ab" style="left:0;top:33px;width:1000px;height:1px;background:#b4b4b4"></div>
<div class="ab" style="left:0;top:51px;width:1000px;height:1px;background:#b4b4b4"></div>
<div class="ab" style="left:0;top:70px;width:1000px;height:1px;background:#b4b4b4"></div>
<div class="ab" style="left:0;top:88px;width:1000px;height:1px;background:#b4b4b4"></div>
<div class="ab" style="left:0;top:106px;width:1000px;height:1px;background:#b4b4b4"></div>
<div class="ab" style="left:0;top:125px;width:1000px;height:1px;background:#b4b4b4"></div>
<div class="ab" style="left:0;top:143px;width:1000px;height:1px;background:#b4b4b4"></div>
<div class="ab" style="left:0;top:161px;width:1000px;height:1px;background:#b4b4b4"></div>
<div class="ab" style="left:0;top:180px;width:1000px;height:1px;background:#b4b4b4"></div>
<div class="ab" style="left:0;top:198px;width:1000px;height:1px;background:#b4b4b4"></div>
<div class="ab" style="left:0;top:216px;width:1000px;height:1px;background:#b4b4b4"></div>
<div class="ab" style="left:0;top:235px;width:1000px;height:1px;background:#b4b4b4"></div>
<div class="ab" style="left:0;top:253px;width:1000px;height:1px;background:#b4b4b4"></div>
<div class="ab" style="left:0;top:272px;width:1000px;height:1px;background:#b4b4b4"></div>
<div class="ab" style="left:0;top:290px;width:1000px;height:1px;background:#b4b4b4"></div>
<div class="ab" style="left:0;top:308px;width:1000px;height:1px;background:#b4b4b4"></div>
<div class="ab" style="left:0;top:327px;width:1000px;height:1px;background:#b4b4b4"></div>
<div class="ab" style="left:0;top:345px;width:1000px;height:1px;background:#b4b4b4"></div>
<div class="ab" style="left:0;top:363px;width:1000px;height:1px;background:#b4b4b4"></div>
<div class="ab" style="left:0;top:382px;width:1000px;height:1px;background:#b4b4b4"></div>
<div class="ab" style="left:0;top:400px;width:1000px;height:1px;background:#b4b4b4"></div>
<div class="ab" style="left:63.0px;top:14.9px;width:1px;height:420px;background:#b0b0b0"></div>
<div class="ab" style="left:111.0px;top:14.9px;width:1px;height:420px;background:#b0b0b0"></div>
<div class="ab" style="left:175.5px;top:14.9px;width:1px;height:420px;background:#b0b0b0"></div>
<div class="ab" style="left:239.0px;top:14.9px;width:1px;height:420px;background:#b0b0b0"></div>
<div class="ab" style="left:295.1px;top:14.9px;width:1px;height:420px;background:#b0b0b0"></div>
<div class="ab" style="left:341.5px;top:14.9px;width:1px;height:420px;background:#b0b0b0"></div>
<div class="ab" style="left:390.0px;top:14.9px;width:1px;height:420px;background:#b0b0b0"></div>
<div class="ab" style="left:446.0px;top:14.9px;width:1px;height:420px;background:#b0b0b0"></div>
<div class="ab" style="left:486.5px;top:14.9px;width:1px;height:420px;background:#b0b0b0"></div>
<div class="ab" style="left:526.0px;top:14.9px;width:1px;height:420px;background:#b0b0b0"></div>
<div class="ab" style="left:574.5px;top:14.9px;width:1px;height:420px;background:#b0b0b0"></div>
<div class="ab" style="left:622.2px;top:14.9px;width:1px;height:420px;background:#b0b0b0"></div>
<div class="ab" style="left:669.8px;top:14.9px;width:1px;height:420px;background:#b0b0b0"></div>
<div class="ab" style="left:717.3px;top:14.9px;width:1px;height:420px;background:#b0b0b0"></div>
<div class="ab" style="left:765.2px;top:14.9px;width:1px;height:420px;background:#b0b0b0"></div>
<div class="ab" style="left:813.2px;top:14.9px;width:1px;height:420px;background:#b0b0b0"></div>
<div class="ab" style="left:861.0px;top:14.9px;width:1px;height:420px;background:#b0b0b0"></div>
<div class="ab" style="left:909.2px;top:14.9px;width:1px;height:420px;background:#b0b0b0"></div>
<div class="ab" style="left:957.3px;top:14.9px;width:1px;height:420px;background:#b0b0b0"></div>
<div class="ab" style="left:186.0px;top:33.4px;width:13.7px;height:9.3px;background:rgb(220,220,220)"></div>
<div class="ab" style="left:199.5px;top:33.4px;width:13.7px;height:9.3px;background:rgb(226,226,226)"></div>
<div class="ab" style="left:186.0px;top:42.6px;width:13.7px;height:9.3px;background:rgb(190,190,190)"></div>
<div class="ab" style="left:199.5px;top:42.6px;width:13.7px;height:9.3px;background:rgb(238,238,238)"></div>
<div class="ab" style="left:186.0px;top:51.8px;width:13.7px;height:9.3px;background:rgb(214,214,214)"></div>
<div class="ab" style="left:199.5px;top:51.8px;width:13.7px;height:9.3px;background:rgb(190,190,190)"></div>
<div class="ab" style="left:186.0px;top:61.0px;width:13.7px;height:9.3px;background:rgb(208,208,208)"></div>
<div class="ab" style="left:199.5px;top:61.0px;width:13.7px;height:9.3px;background:rgb(200,200,200)"></div>
<div class="ab" style="left:186.0px;top:70.1px;width:13.7px;height:9.3px;background:rgb(226,226,226)"></div>
<div class="ab" style="left:199.5px;top:70.1px;width:13.7px;height:9.3px;background:rgb(238,238,238)"></div>
<div class="ab" style="left:186.0px;top:79.3px;width:13.7px;height:9.3px;background:rgb(214,214,214)"></div>
<div class="ab" style="left:199.5px;top:79.3px;width:13.7px;height:9.3px;background:rgb(232,232,232)"></div>
<div class="ab" style="left:186.0px;top:88.5px;width:13.7px;height:9.3px;background:rgb(200,200,200)"></div>
<div class="ab" style="left:199.5px;top:88.5px;width:13.7px;height:9.3px;background:rgb(214,214,214)"></div>
<div class="ab" style="left:186.0px;top:97.7px;width:13.7px;height:9.3px;background:rgb(190,190,190)"></div>
<div class="ab" style="left:199.5px;top:97.7px;width:13.7px;height:9.3px;background:rgb(214,214,214)"></div>
<div class="ab" style="left:186.0px;top:106.9px;width:13.7px;height:9.3px;background:rgb(232,232,232)"></div>
<div class="ab" style="left:199.5px;top:106.9px;width:13.7px;height:9.3px;background:rgb(220,220,220)"></div>
<div class="ab" style="left:186.0px;top:116.1px;width:13.7px;height:9.3px;background:rgb(208,208,208)"></div>
<div class="ab" style="left:199.5px;top:116.1px;width:13.7px;height:9.3px;background:rgb(232,232,232)"></div>
<div class="ab" style="left:186.0px;top:125.2px;width:13.7px;height:9.3px;background:rgb(208,208,208)"></div>
<div class="ab" style="left:199.5px;top:125.2px;width:13.7px;height:9.3px;background:rgb(200,200,200)"></div>
<div class="ab" style="left:186.0px;top:134.4px;width:13.7px;height:9.3px;background:rgb(208,208,208)"></div>
<div class="ab" style="left:199.5px;top:134.4px;width:13.7px;height:9.3px;background:rgb(238,238,238)"></div>
<div class="ab" style="left:186.0px;top:143.6px;width:13.7px;height:9.3px;background:rgb(208,208,208)"></div>
<div class="ab" style="left:199.5px;top:143.6px;width:13.7px;height:9.3px;background:rgb(208,208,208)"></div>
<div class="ab" style="left:186.0px;top:152.8px;width:13.7px;height:9.3px;background:rgb(190,190,190)"></div>
<div class="ab" style="left:199.5px;top:152.8px;width:13.7px;height:9.3px;background:rgb(190,190,190)"></div>
<div class="ab" style="left:186.0px;top:162.0px;width:13.7px;height:9.3px;background:rgb(214,214,214)"></div>
<div class="ab" style="left:199.5px;top:162.0px;width:13.7px;height:9.3px;background:rgb(214,214,214)"></div>
<div class="ab" style="left:186.0px;top:171.2px;width:13.7px;height:9.3px;background:rgb(208,208,208)"></div>
<div class="ab" style="left:199.5px;top:171.2px;width:13.7px;height:9.3px;background:rgb(208,208,208)"></div>
<div class="ab" style="left:186.0px;top:180.4px;width:13.7px;height:9.3px;background:rgb(220,220,220)"></div>
<div class="ab" style="left:199.5px;top:180.4px;width:13.7px;height:9.3px;background:rgb(226,226,226)"></div>
<div class="ab" style="left:186.0px;top:189.5px;width:13.7px;height:9.3px;background:rgb(214,214,214)"></div>
<div class="ab" style="left:199.5px;top:189.5px;width:13.7px;height:9.3px;background:rgb(214,214,214)"></div>
<div class="ab" style="left:186.0px;top:198.7px;width:13.7px;height:9.3px;background:rgb(243,243,243)"></div>
<div class="ab" style="left:199.5px;top:198.7px;width:13.7px;height:9.3px;background:rgb(249,249,249)"></div>
<div class="ab" style="left:186.0px;top:207.9px;width:13.7px;height:9.3px;background:rgb(243,243,243)"></div>
<div class="ab" style="left:199.5px;top:207.9px;width:13.7px;height:9.3px;background:rgb(246,246,246)"></div>
<div class="ab" style="left:186.0px;top:217.1px;width:13.7px;height:9.3px;background:rgb(220,220,220)"></div>
<div class="ab" style="left:199.5px;top:217.1px;width:13.7px;height:9.3px;background:rgb(190,190,190)"></div>
<div class="ab" style="left:186.0px;top:226.3px;width:13.7px;height:9.3px;background:rgb(226,226,226)"></div>
<div class="ab" style="left:199.5px;top:226.3px;width:13.7px;height:9.3px;background:rgb(232,232,232)"></div>
<div class="ab" style="left:186.0px;top:235.5px;width:13.7px;height:9.3px;background:rgb(208,208,208)"></div>
<div class="ab" style="left:199.5px;top:235.5px;width:13.7px;height:9.3px;background:rgb(208,208,208)"></div>
<div class="ab" style="left:186.0px;top:244.7px;width:13.7px;height:9.3px;background:rgb(220,220,220)"></div>
<div class="ab" style="left:199.5px;top:244.7px;width:13.7px;height:9.3px;background:rgb(200,200,200)"></div>
<div class="ab" style="left:186.0px;top:253.8px;width:13.7px;height:9.3px;background:rgb(226,226,226)"></div>
<div class="ab" style="left:199.5px;top:253.8px;width:13.7px;height:9.3px;background:rgb(220,220,220)"></div>
<div class="ab" style="left:186.0px;top:263.0px;width:13.7px;height:9.3px;background:rgb(190,190,190)"></div>
<div class="ab" style="left:199.5px;top:263.0px;width:13.7px;height:9.3px;background:rgb(226,226,226)"></div>
<div class="ab" style="left:186.0px;top:272.2px;width:13.7px;height:9.3px;background:rgb(200,200,200)"></div>
<div class="ab" style="left:199.5px;top:272.2px;width:13.7px;height:9.3px;background:rgb(220,220,220)"></div>
<div class="ab" style="left:186.0px;top:281.4px;width:13.7px;height:9.3px;background:rgb(226,226,226)"></div>
<div class="ab" style="left:199.5px;top:281.4px;width:13.7px;height:9.3px;background:rgb(220,220,220)"></div>
<div class="ab" style="left:186.0px;top:290.6px;width:13.7px;height:9.3px;background:rgb(238,238,238)"></div>
<div class="ab" style="left:199.5px;top:290.6px;width:13.7px;height:9.3px;background:rgb(226,226,226)"></div>
<div class="ab" style="left:186.0px;top:299.8px;width:13.7px;height:9.3px;background:rgb(208,208,208)"></div>
<div class="ab" style="left:199.5px;top:299.8px;width:13.7px;height:9.3px;background:rgb(238,238,238)"></div>
<div class="ab" style="left:186.0px;top:308.9px;width:13.7px;height:9.3px;background:rgb(238,238,238)"></div>
<div class="ab" style="left:199.5px;top:308.9px;width:13.7px;height:9.3px;background:rgb(208,208,208)"></div>
<div class="ab" style="left:186.0px;top:318.1px;width:13.7px;height:9.3px;background:rgb(190,190,190)"></div>
<div class="ab" style="left:199.5px;top:318.1px;width:13.7px;height:9.3px;background:rgb(220,220,220)"></div>
<div class="ab" style="left:186.0px;top:327.3px;width:13.7px;height:9.3px;background:rgb(190,190,190)"></div>
<div class="ab" style="left:199.5px;top:327.3px;width:13.7px;height:9.3px;background:rgb(226,226,226)"></div>
<div class="ab" style="left:186.0px;top:336.5px;width:13.7px;height:9.3px;background:rgb(232,232,232)"></div>
<div class="ab" style="left:199.5px;top:336.5px;width:13.7px;height:9.3px;background:rgb(190,190,190)"></div>
<div class="ab" style="left:186.0px;top:345.7px;width:13.7px;height:9.3px;background:rgb(232,232,232)"></div>
<div class="ab" style="left:199.5px;top:345.7px;width:13.7px;height:9.3px;background:rgb(226,226,226)"></div>
<div class="ab" style="left:186.0px;top:354.9px;width:13.7px;height:9.3px;background:rgb(232,232,232)"></div>
<div class="ab" style="left:199.5px;top:354.9px;width:13.7px;height:9.3px;background:rgb(190,190,190)"></div>
<div class="ab" style="left:186.0px;top:364.1px;width:13.7px;height:9.3px;background:rgb(238,238,238)"></div>
<div class="ab" style="left:199.5px;top:364.1px;width:13.7px;height:9.3px;background:rgb(190,190,190)"></div>
<div class="ab" style="left:186.0px;top:373.2px;width:13.7px;height:9.3px;background:rgb(208,208,208)"></div>
<div class="ab" style="left:199.5px;top:373.2px;width:13.7px;height:9.3px;background:rgb(214,214,214)"></div>
<div class="ab" style="left:186.0px;top:382.4px;width:13.7px;height:9.3px;background:rgb(200,200,200)"></div>
<div class="ab" style="left:199.5px;top:382.4px;width:13.7px;height:9.3px;background:rgb(214,214,214)"></div>
<div class="ab" style="left:186.0px;top:391.6px;width:13.7px;height:9.3px;background:rgb(238,238,238)"></div>
<div class="ab" style="left:199.5px;top:391.6px;width:13.7px;height:9.3px;background:rgb(226,226,226)"></div>
<div class="ab" style="left:186.0px;top:399.0px;width:27.0px;height:8px;background:rgb(236,236,236);border-radius:0 0 10px 10px"></div>
<div class="ab" style="left:913.0px;top:33.4px;width:12.7px;height:9.3px;background:rgb(238,238,238)"></div>
<div class="ab" style="left:925.5px;top:33.4px;width:12.7px;height:9.3px;background:rgb(226,226,226)"></div>
<div class="ab" style="left:913.0px;top:42.6px;width:12.7px;height:9.3px;background:rgb(220,220,220)"></div>
<div class="ab" style="left:925.5px;top:42.6px;width:12.7px;height:9.3px;background:rgb(208,208,208)"></div>
<div class="ab" style="left:913.0px;top:51.8px;width:12.7px;height:9.3px;background:rgb(243,243,243)"></div>
<div class="ab" style="left:925.5px;top:51.8px;width:12.7px;height:9.3px;background:rgb(249,249,249)"></div>
<div class="ab" style="left:913.0px;top:61.0px;width:12.7px;height:9.3px;background:rgb(243,243,243)"></div>
<div class="ab" style="left:925.5px;top:61.0px;width:12.7px;height:9.3px;background:rgb(246,246,246)"></div>
<div class="ab" style="left:913.0px;top:70.1px;width:12.7px;height:9.3px;background:rgb(249,249,249)"></div>
<div class="ab" style="left:925.5px;top:70.1px;width:12.7px;height:9.3px;background:rgb(246,246,246)"></div>
<div class="ab" style="left:913.0px;top:79.3px;width:12.7px;height:9.3px;background:rgb(249,249,249)"></div>
<div class="ab" style="left:925.5px;top:79.3px;width:12.7px;height:9.3px;background:rgb(243,243,243)"></div>
<div class="ab" style="left:913.0px;top:88.5px;width:12.7px;height:9.3px;background:rgb(226,226,226)"></div>
<div class="ab" style="left:925.5px;top:88.5px;width:12.7px;height:9.3px;background:rgb(190,190,190)"></div>
<div class="ab" style="left:913.0px;top:97.7px;width:12.7px;height:9.3px;background:rgb(232,232,232)"></div>
<div class="ab" style="left:925.5px;top:97.7px;width:12.7px;height:9.3px;background:rgb(208,208,208)"></div>
<div class="ab" style="left:913.0px;top:106.9px;width:12.7px;height:9.3px;background:rgb(238,238,238)"></div>
<div class="ab" style="left:925.5px;top:106.9px;width:12.7px;height:9.3px;background:rgb(232,232,232)"></div>
<div class="ab" style="left:913.0px;top:116.1px;width:12.7px;height:9.3px;background:rgb(208,208,208)"></div>
<div class="ab" style="left:925.5px;top:116.1px;width:12.7px;height:9.3px;background:rgb(208,208,208)"></div>
<div class="ab" style="left:913.0px;top:125.2px;width:12.7px;height:9.3px;background:rgb(243,243,243)"></div>
<div class="ab" style="left:925.5px;top:125.2px;width:12.7px;height:9.3px;background:rgb(243,243,243)"></div>
<div class="ab" style="left:913.0px;top:134.4px;width:12.7px;height:9.3px;background:rgb(243,243,243)"></div>
<div class="ab" style="left:925.5px;top:134.4px;width:12.7px;height:9.3px;background:rgb(243,243,243)"></div>
<div class="ab" style="left:913.0px;top:143.6px;width:12.7px;height:9.3px;background:rgb(200,200,200)"></div>
<div class="ab" style="left:925.5px;top:143.6px;width:12.7px;height:9.3px;background:rgb(232,232,232)"></div>
<div class="ab" style="left:913.0px;top:152.8px;width:12.7px;height:9.3px;background:rgb(200,200,200)"></div>
<div class="ab" style="left:925.5px;top:152.8px;width:12.7px;height:9.3px;background:rgb(220,220,220)"></div>
<div class="ab" style="left:913.0px;top:162.0px;width:12.7px;height:9.3px;background:rgb(214,214,214)"></div>
<div class="ab" style="left:925.5px;top:162.0px;width:12.7px;height:9.3px;background:rgb(214,214,214)"></div>
<div class="ab" style="left:913.0px;top:171.2px;width:12.7px;height:9.3px;background:rgb(232,232,232)"></div>
<div class="ab" style="left:925.5px;top:171.2px;width:12.7px;height:9.3px;background:rgb(200,200,200)"></div>
<div class="ab" style="left:913.0px;top:180.4px;width:12.7px;height:9.3px;background:rgb(220,220,220)"></div>
<div class="ab" style="left:925.5px;top:180.4px;width:12.7px;height:9.3px;background:rgb(214,214,214)"></div>
<div class="ab" style="left:913.0px;top:189.5px;width:12.7px;height:9.3px;background:rgb(232,232,232)"></div>
<div class="ab" style="left:925.5px;top:189.5px;width:12.7px;height:9.3px;background:rgb(220,220,220)"></div>
<div class="ab" style="left:913.0px;top:198.7px;width:12.7px;height:9.3px;background:rgb(226,226,226)"></div>
<div class="ab" style="left:925.5px;top:198.7px;width:12.7px;height:9.3px;background:rgb(190,190,190)"></div>
<div class="ab" style="left:913.0px;top:207.9px;width:12.7px;height:9.3px;background:rgb(214,214,214)"></div>
<div class="ab" style="left:925.5px;top:207.9px;width:12.7px;height:9.3px;background:rgb(190,190,190)"></div>
<div class="ab" style="left:913.0px;top:217.1px;width:12.7px;height:9.3px;background:rgb(232,232,232)"></div>
<div class="ab" style="left:925.5px;top:217.1px;width:12.7px;height:9.3px;background:rgb(190,190,190)"></div>
<div class="ab" style="left:913.0px;top:226.3px;width:12.7px;height:9.3px;background:rgb(232,232,232)"></div>
<div class="ab" style="left:925.5px;top:226.3px;width:12.7px;height:9.3px;background:rgb(238,238,238)"></div>
<div class="ab" style="left:913.0px;top:235.5px;width:12.7px;height:9.3px;background:rgb(243,243,243)"></div>
<div class="ab" style="left:925.5px;top:235.5px;width:12.7px;height:9.3px;background:rgb(243,243,243)"></div>
<div class="ab" style="left:913.0px;top:244.7px;width:12.7px;height:9.3px;background:rgb(243,243,243)"></div>
<div class="ab" style="left:925.5px;top:244.7px;width:12.7px;height:9.3px;background:rgb(246,246,246)"></div>
<div class="ab" style="left:913.0px;top:253.8px;width:12.7px;height:9.3px;background:rgb(249,249,249)"></div>
<div class="ab" style="left:925.5px;top:253.8px;width:12.7px;height:9.3px;background:rgb(243,243,243)"></div>
<div class="ab" style="left:913.0px;top:263.0px;width:12.7px;height:9.3px;background:rgb(249,249,249)"></div>
<div class="ab" style="left:925.5px;top:263.0px;width:12.7px;height:9.3px;background:rgb(243,243,243)"></div>
<div class="ab" style="left:913.0px;top:272.2px;width:12.7px;height:9.3px;background:rgb(200,200,200)"></div>
<div class="ab" style="left:925.5px;top:272.2px;width:12.7px;height:9.3px;background:rgb(214,214,214)"></div>
<div class="ab" style="left:913.0px;top:281.4px;width:12.7px;height:9.3px;background:rgb(214,214,214)"></div>
<div class="ab" style="left:925.5px;top:281.4px;width:12.7px;height:9.3px;background:rgb(226,226,226)"></div>
<div class="ab" style="left:913.0px;top:290.6px;width:12.7px;height:9.3px;background:rgb(190,190,190)"></div>
<div class="ab" style="left:925.5px;top:290.6px;width:12.7px;height:9.3px;background:rgb(200,200,200)"></div>
<div class="ab" style="left:913.0px;top:299.8px;width:12.7px;height:9.3px;background:rgb(208,208,208)"></div>
<div class="ab" style="left:925.5px;top:299.8px;width:12.7px;height:9.3px;background:rgb(190,190,190)"></div>
<div class="ab" style="left:913.0px;top:308.9px;width:12.7px;height:9.3px;background:rgb(200,200,200)"></div>
<div class="ab" style="left:925.5px;top:308.9px;width:12.7px;height:9.3px;background:rgb(238,238,238)"></div>
<div class="ab" style="left:913.0px;top:318.1px;width:12.7px;height:9.3px;background:rgb(214,214,214)"></div>
<div class="ab" style="left:925.5px;top:318.1px;width:12.7px;height:9.3px;background:rgb(232,232,232)"></div>
<div class="ab" style="left:913.0px;top:327.3px;width:12.7px;height:9.3px;background:rgb(200,200,200)"></div>
<div class="ab" style="left:925.5px;top:327.3px;width:12.7px;height:9.3px;background:rgb(232,232,232)"></div>
<div class="ab" style="left:913.0px;top:336.5px;width:12.7px;height:9.3px;background:rgb(214,214,214)"></div>
<div class="ab" style="left:925.5px;top:336.5px;width:12.7px;height:9.3px;background:rgb(200,200,200)"></div>
<div class="ab" style="left:913.0px;top:345.7px;width:12.7px;height:9.3px;background:rgb(249,249,249)"></div>
<div class="ab" style="left:925.5px;top:345.7px;width:12.7px;height:9.3px;background:rgb(249,249,249)"></div>
<div class="ab" style="left:913.0px;top:354.9px;width:12.7px;height:9.3px;background:rgb(243,243,243)"></div>
<div class="ab" style="left:925.5px;top:354.9px;width:12.7px;height:9.3px;background:rgb(243,243,243)"></div>
<div class="ab" style="left:913.0px;top:364.1px;width:12.7px;height:9.3px;background:rgb(249,249,249)"></div>
<div class="ab" style="left:925.5px;top:364.1px;width:12.7px;height:9.3px;background:rgb(249,249,249)"></div>
<div class="ab" style="left:913.0px;top:373.2px;width:12.7px;height:9.3px;background:rgb(243,243,243)"></div>
<div class="ab" style="left:925.5px;top:373.2px;width:12.7px;height:9.3px;background:rgb(243,243,243)"></div>
<div class="ab" style="left:913.0px;top:374.0px;width:25.0px;height:8px;background:rgb(236,236,236);border-radius:0 0 10px 10px"></div>
<div class="ab" style="left:184.0px;top:13.5px;width:29px;height:20px;background:#7ab6f8;border-radius:9px 9px 0 0;border-top:1.5px solid #a8bccc"></div>
<div class="ab" style="left:186.0px;top:33.4px;width:27px;height:7px;background:#8fb8e8"></div>
<div class="ab" style="left:913.0px;top:13.5px;width:25px;height:20px;background:#7ab6f8;border-radius:8px 8px 0 0"></div>
<div class="ab" style="left:913.0px;top:33.4px;width:25px;height:7px;background:#8fb8e8"></div>
<div class="ab" style="left:972.5px;top:0;width:13px;height:396.0px;background:#eeeeee;border-left:1px solid #e0e0e0"></div>
<div class="ab" style="left:976.0px;top:4.0px;width:0;height:0;border-left:3.5px solid transparent;border-right:3.5px solid transparent;border-bottom:4px solid #333"></div>
<div class="ab" style="left:973.5px;top:14.0px;width:11px;height:12px;background:linear-gradient(90deg,#f8f8f8,#e4e4e4);border:1px solid #a8a8a8;border-radius:2px"></div>
<div class="ab" style="left:976.0px;top:387.0px;width:0;height:0;border-left:3.5px solid transparent;border-right:3.5px solid transparent;border-top:3px solid #555"></div>
<div class="ab" style="left:0;top:396.0px;width:1000px;height:13px;background:#eeeeee;border-top:1px solid #e4e4e4"></div>
<div class="ab" style="left:14.0px;top:396.0px;width:659.5px;height:12px;background:linear-gradient(#f4f4f4,#d4d4d4);border:1px solid #bcbcbc;border-radius:2px"></div>
<div class="ab" style="left:3.0px;top:399.5px;width:0;height:0;border-top:3px solid transparent;border-bottom:3px solid transparent;border-right:3px solid #444"></div>
<div class="ab" style="left:965.0px;top:399.5px;width:0;height:0;border-top:3px solid transparent;border-bottom:3px solid transparent;border-left:3px solid #444"></div>
<div class="t" style="left:341.0px;top:399.0px;font-size:7px;color:#666">III</div>
</div>
</body></html>
